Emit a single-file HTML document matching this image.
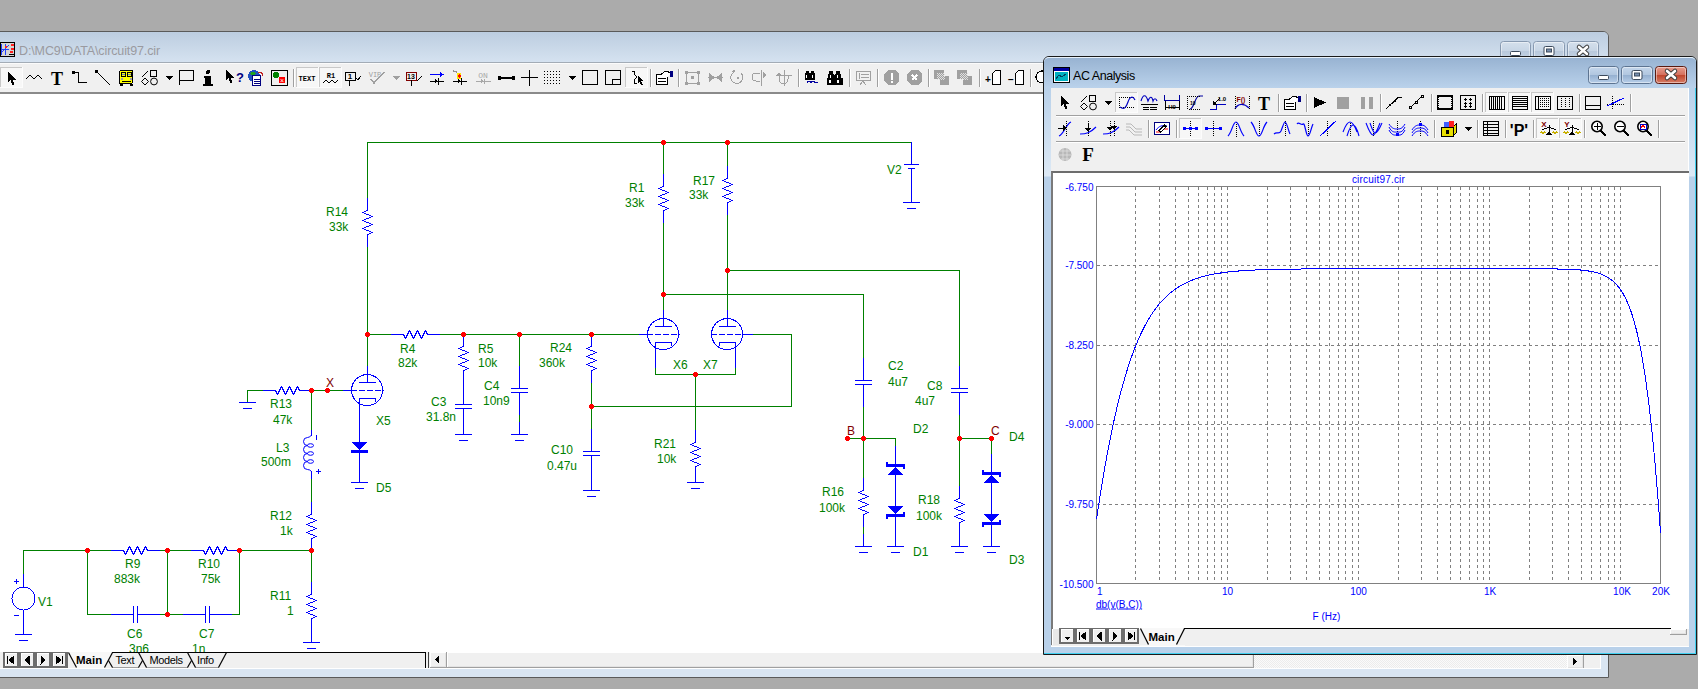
<!DOCTYPE html>
<html><head><meta charset="utf-8">
<style>
*{margin:0;padding:0;box-sizing:border-box}
html,body{width:1698px;height:689px;overflow:hidden;background:#ababab;font-family:"Liberation Sans",sans-serif;position:relative}
.a{position:absolute}
#mainwin{left:-8px;top:31px;width:1617px;height:647px;background:#d9e5f2;border:1px solid #5a5a5a;border-radius:6px 6px 0 0}
#maintitle{left:0;top:32px;width:1608px;height:31px;background:linear-gradient(#bccde0,#d5e2f0);border-radius:0 5px 0 0;border-bottom:1px solid #a3acb6}
#toolbar{left:0;top:63px;width:1601px;height:31px;background:#f0f0f0;border-top:1px solid #fbfbfb;border-bottom:2px solid #8a8a8a}
#canvas{left:0;top:94px;width:1601px;height:558px;background:#fff;overflow:hidden}
#tabs{left:0;top:652px;width:1601px;height:17px;background:#f0f0f0;border-bottom:1px solid #fff}
#acwin{left:1043px;top:56px;width:654px;height:599px;background:linear-gradient(#b9d1ea 0,#b9d1ea 32px,#dde9f5 119px,#b9d1ea 120px,#b9d1ea 100%);border:1px solid #1a1a1a;border-radius:6px 6px 0 0;box-shadow:inset -1px -1px 0 #40d0f0}
#actitle{left:1044px;top:57px;width:652px;height:31px;background:linear-gradient(#98b3d2,#bad2eb);border-radius:5px 5px 0 0;border-top:1px solid #e8f2fb}
#acclient{left:1051px;top:88px;width:638px;height:559px;background:#f0f0f0;border-bottom:1px solid #fff;border-right:1px solid #fff}
#plot{left:1051px;top:171px;width:638px;height:474px;background:#fff;border-top:2px solid #6d6d6d;border-left:2px solid #7a7a7a}
.btn{position:absolute;height:18px;border:1px solid #6b7f99;border-radius:3px;background:linear-gradient(#d8e4f1 0,#c8d7e8 50%,#b4c8df 51%,#c9dbee 100%)}
</style></head><body>
<div id="mainwin" class="a"></div>
<div id="maintitle" class="a"></div>
<div id="toolbar" class="a"></div>
<svg class="a" style="left:0;top:0" width="1698" height="100" shape-rendering="crispEdges"><defs><pattern id="dith" width="2" height="2" patternUnits="userSpaceOnUse"><rect width="1" height="1" fill="#e0e0e0"/><rect x="1" y="1" width="1" height="1" fill="#e0e0e0"/></pattern>
<linearGradient id="ginact" x1="0" y1="0" x2="0" y2="1"><stop offset="0" stop-color="#d5e0ec"/><stop offset=".5" stop-color="#c7d5e5"/><stop offset=".51" stop-color="#b9c9dc"/><stop offset="1" stop-color="#c5d4e5"/></linearGradient>
<linearGradient id="gact" x1="0" y1="0" x2="0" y2="1"><stop offset="0" stop-color="#c5d7ec"/><stop offset=".5" stop-color="#b0c6df"/><stop offset=".51" stop-color="#95b0d0"/><stop offset="1" stop-color="#b9d0ea"/></linearGradient>
<linearGradient id="gred" x1="0" y1="0" x2="0" y2="1"><stop offset="0" stop-color="#e8a092"/><stop offset=".5" stop-color="#d46f5c"/><stop offset=".51" stop-color="#c0452c"/><stop offset="1" stop-color="#d8806a"/></linearGradient>
</defs><rect x="0" y="67" width="23" height="21" fill="#f7f7f7"/><path d="M0 67.5H23" stroke="#c8c8c8"/><path d="M0.5 67V88" stroke="#c8c8c8"/><path d="M0 87.5H23" stroke="#fcfcfc"/><path d="M22.5 67V88" stroke="#fcfcfc"/><polygon points="8,72 8,82.0 10.5,80.0 12.5,85.0 14.5,84.0 12.5,79.5 16.0,79.5" fill="#000"/><polyline points="26,79 30,75 34,79 38,75 42,79" fill="none" stroke="#000" stroke-width="1" stroke-linejoin="bevel"/><text x="57" y="85" fill="#000" font-size="18" font-weight="bold" font-family="Liberation Serif" text-anchor="middle" >T</text><rect x="72" y="71" width="3" height="3" fill="#000"/><polyline points="74,72.5 78.5,72.5 78.5,82.5 87,82.5" fill="none" stroke="#000" stroke-width="1" /><rect x="95" y="70" width="3" height="3" fill="#000"/><polyline points="96,71 110,85" fill="none" stroke="#000" stroke-width="1.2" /><rect x="119.5" y="70.5" width="13" height="13" rx="1.5" fill="#ffff00" stroke="#000"/><rect x="120" y="84" width="3" height="2" fill="#000"/><rect x="130" y="84" width="3" height="2" fill="#000"/><rect x="121.5" y="72.5" width="4" height="4" fill="none" stroke="#000" stroke-width="1"/><rect x="127.5" y="72.5" width="4" height="4" fill="none" stroke="#000" stroke-width="1"/><path d="M122 74.5H125" stroke="#6080c0"/><path d="M128 74.5H131" stroke="#6080c0"/><rect x="121" y="78" width="2" height="2" fill="#a0a0a0"/><rect x="130" y="78" width="2" height="2" fill="#a0a0a0"/><path d="M122 81.5H131" stroke="#000"/><polyline points="142,77 148,71" fill="none" stroke="#000" stroke-width="1.2" /><rect x="150.5" y="70.5" width="6" height="6" fill="none" stroke="#000" stroke-width="1"/><polygon points="145,78 149,81.5 145,85 141.5,81.5" fill="none"/><polygon points="145,78 148.5,81.5 145,85 141.5,81.5" fill="none" stroke="#000" shape-rendering="auto"/><circle cx="154" cy="81.5" r="3.4" fill="none" stroke="#000" shape-rendering="auto"/><polygon points="165,76 173,76 169,80" fill="#000"/><polyline points="179.5,85 179.5,70.5 193.5,70.5 193.5,80.5 179.5,80.5" fill="none" stroke="#000" stroke-width="1" /><circle cx="208" cy="72" r="2" fill="#000"/><rect x="205" y="76" width="6" height="10" fill="#000"/><rect x="203" y="84" width="10" height="2" fill="#000"/><rect x="204" y="76" width="3" height="2" fill="#000"/><polygon points="226,70 226,80.0 228.5,78.0 230.5,83.0 232.5,82.0 230.5,77.5 234.0,77.5" fill="#000"/><text x="236" y="82" fill="#000080" font-size="13" font-weight="bold" font-family="Liberation Sans" text-anchor="start" >?</text><circle cx="254" cy="76" r="6" fill="#2050c0"/><path d="M250 73 q3 -3 6 0 q-2 3 -5 2z" fill="#20a020"/><rect x="252.5" y="75.5" width="8" height="10" fill="#fff" stroke="#000080"/><path d="M254 79.5H260" stroke="#000080"/><path d="M254 81.5H260" stroke="#000080"/><path d="M254 83.5H260" stroke="#000080"/><path d="M258 73 q4 -2 5 3" fill="none" stroke="#c02020" stroke-width="1.2"/><rect x="271.5" y="70.5" width="16" height="15" fill="none" stroke="#000" stroke-width="1"/><circle cx="276" cy="75" r="3" fill="#008000"/><circle cx="282" cy="80" r="3.5" fill="#ff0000"/><text x="282" y="82.5" fill="#fff" font-size="7" font-weight="normal" font-family="Liberation Sans" text-anchor="middle" >×</text><path d="M293.5 69V87" stroke="#a0a0a0"/><path d="M294.5 69V87" stroke="#ffffff"/><rect x="296" y="67" width="23" height="21" fill="#f7f7f7"/><path d="M296 67.5H319" stroke="#c8c8c8"/><path d="M296.5 67V88" stroke="#c8c8c8"/><path d="M296 87.5H319" stroke="#fcfcfc"/><path d="M318.5 67V88" stroke="#fcfcfc"/><text x="307" y="81" fill="#000" font-size="7" font-weight="bold" font-family="Liberation Mono" text-anchor="middle" >TEXT</text><rect x="319" y="67" width="23" height="21" fill="#f7f7f7"/><path d="M319 67.5H342" stroke="#c8c8c8"/><path d="M319.5 67V88" stroke="#c8c8c8"/><path d="M319 87.5H342" stroke="#fcfcfc"/><path d="M341.5 67V88" stroke="#fcfcfc"/><text x="331" y="78" fill="#000" font-size="7" font-weight="bold" font-family="Liberation Mono" text-anchor="middle" >R1</text><polyline points="323,83 326,80 329,83 332,80 335,83 338,80" fill="none" stroke="#000" stroke-width="1" /><rect x="345.5" y="72.5" width="10" height="8" fill="none" stroke="#000" stroke-width="1"/><text x="350" y="79" fill="#000" font-size="8" font-weight="bold" font-family="Liberation Sans" text-anchor="middle" >1</text><path d="M349.5 80V86" stroke="#000"/><polyline points="355,77 358,80 361,76" fill="none" stroke="#000" stroke-width="1" /><text x="375" y="77" fill="#a0a0a0" font-size="7" font-weight="normal" font-family="Liberation Mono" text-anchor="middle" >VIP</text><polyline points="371,79 374,83 384,72" fill="none" stroke="#a0a0a0" stroke-width="1.5" /><polygon points="392,76 400,76 396,80" fill="#a0a0a0"/><rect x="406.5" y="72.5" width="10" height="8" fill="none" stroke="#800000" stroke-width="1"/><text x="411" y="79" fill="#000" font-size="7" font-weight="bold" font-family="Liberation Sans" text-anchor="middle" >13</text><path d="M411.5 80V86" stroke="#000"/><polyline points="417,81 422,76" fill="none" stroke="#000" stroke-width="1" /><path d="M430 74.5H442" stroke="#0000ff"/><polygon points="440,72 444,74.5 440,77" fill="#0000ff"/><path d="M430 81.5H444" stroke="#000"/><polygon points="435,78.5 438,81 435,83.5" fill="#000"/><path d="M438.5 78V85" stroke="#000"/><ellipse cx="459" cy="76" rx="2.5" ry="3.5" fill="#ffe000"/><polygon points="459,74 461,76 459,78 457,76" fill="#ff0000"/><polyline points="453,71 457,72" fill="none" stroke="#909090" stroke-width="1.5" /><path d="M453 81.5H467" stroke="#000"/><polygon points="458,78.5 461,81 458,83.5" fill="#000"/><path d="M461.5 78V85" stroke="#000"/><text x="483" y="78" fill="#a8a8a8" font-size="8" font-weight="normal" font-family="Liberation Mono" text-anchor="middle" >ON</text><path d="M476 81.5H491" stroke="#a8a8a8"/><polygon points="481,79 484,81 481,83" fill="#a8a8a8"/><path d="M484.5 79V84" stroke="#a8a8a8"/><rect x="498" y="76" width="3" height="4" fill="#000"/><rect x="512" y="76" width="3" height="4" fill="#000"/><path d="M500 77.5H513" stroke="#000"/><path d="M500 78.5H513" stroke="#000"/><path d="M521 77.5H538" stroke="#000"/><path d="M529.5 70V86" stroke="#000"/><rect x="544" y="71" width="1" height="1" fill="#000"/><rect x="544" y="74" width="1" height="1" fill="#000"/><rect x="544" y="77" width="1" height="1" fill="#000"/><rect x="544" y="80" width="1" height="1" fill="#000"/><rect x="544" y="83" width="1" height="1" fill="#000"/><rect x="547" y="71" width="1" height="1" fill="#000"/><rect x="547" y="74" width="1" height="1" fill="#000"/><rect x="547" y="77" width="1" height="1" fill="#000"/><rect x="547" y="80" width="1" height="1" fill="#000"/><rect x="547" y="83" width="1" height="1" fill="#000"/><rect x="550" y="71" width="1" height="1" fill="#000"/><rect x="550" y="74" width="1" height="1" fill="#000"/><rect x="550" y="77" width="1" height="1" fill="#000"/><rect x="550" y="80" width="1" height="1" fill="#000"/><rect x="550" y="83" width="1" height="1" fill="#000"/><rect x="553" y="71" width="1" height="1" fill="#000"/><rect x="553" y="74" width="1" height="1" fill="#000"/><rect x="553" y="77" width="1" height="1" fill="#000"/><rect x="553" y="80" width="1" height="1" fill="#000"/><rect x="553" y="83" width="1" height="1" fill="#000"/><rect x="556" y="71" width="1" height="1" fill="#000"/><rect x="556" y="74" width="1" height="1" fill="#000"/><rect x="556" y="77" width="1" height="1" fill="#000"/><rect x="556" y="80" width="1" height="1" fill="#000"/><rect x="556" y="83" width="1" height="1" fill="#000"/><rect x="559" y="71" width="1" height="1" fill="#000"/><rect x="559" y="74" width="1" height="1" fill="#000"/><rect x="559" y="77" width="1" height="1" fill="#000"/><rect x="559" y="80" width="1" height="1" fill="#000"/><rect x="559" y="83" width="1" height="1" fill="#000"/><polygon points="568,76 576,76 572,80" fill="#000"/><rect x="582.5" y="70.5" width="15" height="14" fill="none" stroke="#000" stroke-width="1.3"/><rect x="605.5" y="70.5" width="15" height="14" fill="none" stroke="#000" stroke-width="1.3"/><rect x="612.5" y="79.5" width="8" height="5" fill="none" stroke="#000" stroke-width="1"/><rect x="625" y="67" width="23" height="21" fill="#f7f7f7"/><path d="M625 67.5H648" stroke="#c8c8c8"/><path d="M625.5 67V88" stroke="#c8c8c8"/><path d="M625 87.5H648" stroke="#fcfcfc"/><path d="M647.5 67V88" stroke="#fcfcfc"/><polyline points="632,71.5 634.5,71.5 634.5,74.5 637,77 634.5,79.5 634.5,83.5 637,83.5" fill="none" stroke="#000" stroke-width="1.2" /><polygon points="638,76 638,83.2 639.8,81.76 641.24,85.36 642.68,84.64 641.24,81.4 643.76,81.4" fill="#000"/><path d="M650.5 69V87" stroke="#a0a0a0"/><path d="M651.5 69V87" stroke="#ffffff"/><rect x="656.5" y="74.5" width="11" height="10" fill="#fff" stroke="#000"/><path d="M658 78.5H666" stroke="#000"/><path d="M658 81.5H666" stroke="#000"/><polygon points="661,74 666,71 671,73 667,77" fill="#fff"/><polyline points="661,74 666,71 671,73" fill="none" stroke="#000" stroke-width="1" /><rect x="670" y="71" width="3" height="6" fill="#000080"/><path d="M678.5 69V87" stroke="#a0a0a0"/><path d="M679.5 69V87" stroke="#ffffff"/><rect x="686.5" y="72.5" width="12" height="11" fill="none" stroke="#a0a0a0" stroke-width="1.2"/><rect x="685" y="71" width="3" height="3" fill="#a0a0a0"/><rect x="697" y="71" width="3" height="3" fill="#a0a0a0"/><rect x="685" y="82" width="3" height="3" fill="#a0a0a0"/><rect x="697" y="82" width="3" height="3" fill="#a0a0a0"/><rect x="691" y="76" width="3" height="3" fill="#a0a0a0"/><path d="M708 77.5H723" stroke="#a0a0a0"/><polygon points="709,73 715,77.5 709,82" fill="#a0a0a0"/><polygon points="722,73 716,77.5 722,82" fill="#a0a0a0"/><path d="M734 72 A6 6 0 1 0 741 73" fill="none" stroke="#a0a0a0"/><rect x="737" y="77" width="2" height="2" fill="#a0a0a0"/><polygon points="731,71 735,70 734,74" fill="#a0a0a0"/><path d="M760 73 H756 A4 4 0 0 0 756 81 H760" fill="none" stroke="#a0a0a0"/><path d="M761.5 70V86" stroke="#a0a0a0"/><polygon points="763,72 767,75 763,78" fill="#a0a0a0"/><path d="M776 75.5H792" stroke="#a0a0a0"/><path d="M784.5 70V86" stroke="#a0a0a0"/><path d="M779 75 V79 A3 3 0 0 0 788 79 V75" fill="none" stroke="#a0a0a0"/><polygon points="776,76 779,72 782,76" fill="#a0a0a0"/><path d="M798.5 69V87" stroke="#a0a0a0"/><path d="M799.5 69V87" stroke="#ffffff"/><rect x="806" y="71" width="3" height="2" fill="#000"/><rect x="811" y="71" width="3" height="2" fill="#000"/><rect x="805" y="73" width="5" height="7" fill="#000"/><rect x="810" y="73" width="5" height="7" fill="#000"/><rect x="809" y="74" width="2" height="4" fill="#000"/><rect x="806" y="75" width="1" height="3" fill="#fff"/><rect x="812" y="75" width="1" height="3" fill="#fff"/><polyline points="807,82.5 809,81 811,82.5 813,81 815,82.5 818,82" fill="none" stroke="#0000a0" stroke-width="1" stroke-linejoin="bevel"/><rect x="829" y="71" width="4" height="3" fill="#000"/><rect x="836" y="71" width="4" height="3" fill="#000"/><rect x="828" y="74" width="6" height="11" fill="#000"/><rect x="835" y="74" width="6" height="11" fill="#000"/><rect x="827" y="78" width="16" height="7" fill="#000"/><rect x="833" y="75" width="3" height="5" fill="#000"/><rect x="829" y="80" width="2" height="3" fill="#fff"/><rect x="837" y="80" width="2" height="3" fill="#fff"/><rect x="830" y="75" width="1" height="3" fill="#fff"/><rect x="837" y="75" width="1" height="3" fill="#fff"/><path d="M849.5 69V87" stroke="#a0a0a0"/><path d="M850.5 69V87" stroke="#ffffff"/><rect x="856.5" y="71.5" width="14" height="9" fill="none" stroke="#a0a0a0" stroke-width="1.3"/><path d="M861 74.5H869" stroke="#a0a0a0"/><path d="M861 77.5H869" stroke="#a0a0a0"/><path d="M859.5 73V79" stroke="#a0a0a0"/><polyline points="860,85 863,81 866,85" fill="none" stroke="#a0a0a0" stroke-width="1" /><path d="M877.5 69V87" stroke="#a0a0a0"/><path d="M878.5 69V87" stroke="#ffffff"/><polygon points="888,70 895,70 899,74 899,81 895,85 888,85 884,81 884,74" fill="#a0a0a0"/><rect x="891" y="73" width="2" height="7" fill="#fff"/><rect x="891" y="81" width="2" height="2" fill="#fff"/><polygon points="911,70 918,70 922,74 922,81 918,85 911,85 907,81 907,74" fill="#a0a0a0"/><polyline points="912,75 917,80" fill="none" stroke="#fff" stroke-width="1.5" /><polyline points="917,75 912,80" fill="none" stroke="#fff" stroke-width="1.5" /><path d="M928.5 69V87" stroke="#a0a0a0"/><path d="M929.5 69V87" stroke="#ffffff"/><rect x="934" y="70" width="10" height="9" fill="#a0a0a0"/><rect x="940" y="76" width="9" height="9" fill="#a0a0a0"/><rect x="937" y="73" width="8" height="7" fill="url(#dith)"/><rect x="957" y="70" width="10" height="9" fill="#a0a0a0"/><rect x="963" y="76" width="9" height="9" fill="#a0a0a0"/><rect x="960" y="73" width="8" height="7" fill="url(#dith)"/><path d="M979.5 69V87" stroke="#a0a0a0"/><path d="M980.5 69V87" stroke="#ffffff"/><text x="988" y="83" fill="#000" font-size="10" font-weight="bold" font-family="Liberation Sans" text-anchor="middle" >+</text><path d="M992.5 84.5 V73.5 L995.5 70.5 H1000.5 V84.5 Z" fill="#fff" stroke="#000" stroke-width="1.2"/><text x="1011" y="83" fill="#000" font-size="10" font-weight="bold" font-family="Liberation Sans" text-anchor="middle" >−</text><path d="M1015.5 84.5 V73.5 L1018.5 70.5 H1023.5 V84.5 Z" fill="#fff" stroke="#000" stroke-width="1.2"/><path d="M1030.5 69V87" stroke="#a0a0a0"/><path d="M1031.5 69V87" stroke="#ffffff"/><circle cx="1042" cy="77" r="6" fill="#fff" stroke="#000" stroke-width="1.2"/><rect x="1500.5" y="41.5" width="30" height="19" rx="3" fill="url(#ginact)" stroke="#8799b0" shape-rendering="auto"/><rect x="1501.5" y="42.5" width="28" height="17" rx="2" fill="none" stroke="#ffffff" stroke-opacity=".45" shape-rendering="auto"/><rect x="1510.5" y="51.5" width="10" height="4" rx="1" fill="#fff" stroke="#3c4a5c" shape-rendering="auto"/><rect x="1533.5" y="41.5" width="31" height="19" rx="3" fill="url(#ginact)" stroke="#8799b0" shape-rendering="auto"/><rect x="1534.5" y="42.5" width="29" height="17" rx="2" fill="none" stroke="#ffffff" stroke-opacity=".45" shape-rendering="auto"/><rect x="1544.0" y="46.5" width="10" height="9" rx="1.5" fill="#fff" stroke="#3c4a5c" shape-rendering="auto"/><rect x="1546.5" y="49.0" width="5" height="3" fill="#7890b0" stroke="#3c4a5c" shape-rendering="auto"/><rect x="1567.5" y="41.5" width="31" height="19" rx="3" fill="url(#ginact)" stroke="#8799b0" shape-rendering="auto"/><rect x="1568.5" y="42.5" width="29" height="17" rx="2" fill="none" stroke="#ffffff" stroke-opacity=".45" shape-rendering="auto"/><path d="M1579.0 47.0L1587.0 54.0M1587.0 47.0L1579.0 54.0" stroke="#3c3c3c" stroke-width="4.5" stroke-linecap="round" shape-rendering="auto"/><path d="M1579.0 47.0L1587.0 54.0M1587.0 47.0L1579.0 54.0" stroke="#fff" stroke-width="2.6" stroke-linecap="round" shape-rendering="auto"/><rect x="0.5" y="42.5" width="14" height="14" fill="#d4d4d4" stroke="#000" stroke-width="1"/><path d="M1.5 44V55" stroke="#2040ff"/><path d="M5.5 44V55" stroke="#2040ff"/><polyline points="2,52 9,45" fill="none" stroke="#2040ff" stroke-width="1.2" /><path d="M1 49.5H9" stroke="#2040ff"/><rect x="5" y="46" width="2" height="2" fill="#ff2020"/><rect x="11" y="44" width="3" height="2" fill="#ff2020"/><rect x="11" y="48" width="3" height="2" fill="#ff2020"/><rect x="10" y="51" width="3" height="2" fill="#ff2020"/><path d="M9 54.5H14" stroke="#000"/><text x="19" y="55" fill="#9a9aa0" font-size="12.5" letter-spacing="-0.12" font-family="Liberation Sans">D:\MC9\DATA\circuit97.cir</text></svg>
<div id="canvas" class="a"></div>
<svg class="a" style="left:0;top:0" width="1698" height="689" shape-rendering="crispEdges" font-family="Liberation Sans" font-size="12"><path d="M367 142.5H912" stroke="#008000"/><path d="M367.5 142V199" stroke="#008000"/><path d="M367.5 246V367" stroke="#008000"/><path d="M663.5 142V175" stroke="#008000"/><path d="M663.5 222V311" stroke="#008000"/><path d="M727.5 142V167" stroke="#008000"/><path d="M727.5 214V311" stroke="#008000"/><path d="M727 270.5H960" stroke="#008000"/><path d="M959.5 270V367" stroke="#008000"/><path d="M663 294.5H864" stroke="#008000"/><path d="M863.5 294V359" stroke="#008000"/><path d="M367 334.5H392" stroke="#008000"/><path d="M439 334.5H640" stroke="#008000"/><path d="M519.5 334V367" stroke="#008000"/><path d="M591.5 334V335" stroke="#008000"/><path d="M591.5 382V430" stroke="#008000"/><path d="M591 406.5H792" stroke="#008000"/><path d="M791.5 334V407" stroke="#008000"/><path d="M752 334.5H792" stroke="#008000"/><path d="M655.5 367V375" stroke="#008000"/><path d="M655 374.5H736" stroke="#008000"/><path d="M735.5 367V375" stroke="#008000"/><path d="M695.5 374V431" stroke="#008000"/><path d="M863.5 406V479" stroke="#008000"/><path d="M847 438.5H896" stroke="#008000"/><path d="M895.5 438V447" stroke="#008000"/><path d="M863.5 526V535" stroke="#008000"/><path d="M959.5 414V487" stroke="#008000"/><path d="M959 438.5H992" stroke="#008000"/><path d="M991.5 438V455" stroke="#008000"/><path d="M519.5 415V422" stroke="#008000"/><path d="M247 390.5H264" stroke="#008000"/><path d="M311 390.5H344" stroke="#008000"/><path d="M311.5 390V431" stroke="#008000"/><path d="M311.5 478V503" stroke="#008000"/><path d="M311.5 550V583" stroke="#008000"/><path d="M23 550.5H112" stroke="#008000"/><path d="M23.5 550V575" stroke="#008000"/><path d="M87.5 550V615" stroke="#008000"/><path d="M87 614.5H112" stroke="#008000"/><path d="M159 550.5H192" stroke="#008000"/><path d="M159 614.5H184" stroke="#008000"/><path d="M167.5 550V615" stroke="#008000"/><path d="M231 614.5H240" stroke="#008000"/><path d="M239.5 550V615" stroke="#008000"/><path d="M239 550.5H312" stroke="#008000"/><path d="M367.5 198V211" stroke="#0000ff"/><polyline points="367.5,210.5 362.5,212.5 372.5,216.5 362.5,220.5 372.5,224.5 362.5,228.5 372.5,232.5 367.5,234.5" fill="none" stroke="#0000ff" stroke-linejoin="bevel"/><path d="M367.5 234V247" stroke="#0000ff"/><path d="M663.5 174V187" stroke="#0000ff"/><polyline points="663.5,186.5 658.5,188.5 668.5,192.5 658.5,196.5 668.5,200.5 658.5,204.5 668.5,208.5 663.5,210.5" fill="none" stroke="#0000ff" stroke-linejoin="bevel"/><path d="M663.5 210V223" stroke="#0000ff"/><path d="M727.5 166V179" stroke="#0000ff"/><polyline points="727.5,178.5 722.5,180.5 732.5,184.5 722.5,188.5 732.5,192.5 722.5,196.5 732.5,200.5 727.5,202.5" fill="none" stroke="#0000ff" stroke-linejoin="bevel"/><path d="M727.5 202V215" stroke="#0000ff"/><path d="M463.5 334V347" stroke="#0000ff"/><polyline points="463.5,346.5 458.5,348.5 468.5,352.5 458.5,356.5 468.5,360.5 458.5,364.5 468.5,368.5 463.5,370.5" fill="none" stroke="#0000ff" stroke-linejoin="bevel"/><path d="M463.5 370V383" stroke="#0000ff"/><path d="M463.5 382V405" stroke="#0000ff"/><path d="M455 404.5H472" stroke="#0000ff"/><path d="M455 408.5H472" stroke="#0000ff"/><path d="M463.5 408V431" stroke="#0000ff"/><path d="M463.5 430V435" stroke="#0000ff"/><path d="M455 434.5H472" stroke="#0000ff"/><path d="M459 440.5H468" stroke="#0000ff"/><path d="M519.5 366V389" stroke="#0000ff"/><path d="M511 388.5H528" stroke="#0000ff"/><path d="M511 392.5H528" stroke="#0000ff"/><path d="M519.5 392V415" stroke="#0000ff"/><path d="M519.5 422V435" stroke="#0000ff"/><path d="M511 434.5H528" stroke="#0000ff"/><path d="M515 440.5H524" stroke="#0000ff"/><path d="M591.5 334V347" stroke="#0000ff"/><polyline points="591.5,346.5 586.5,348.5 596.5,352.5 586.5,356.5 596.5,360.5 586.5,364.5 596.5,368.5 591.5,370.5" fill="none" stroke="#0000ff" stroke-linejoin="bevel"/><path d="M591.5 370V383" stroke="#0000ff"/><path d="M591.5 429V452" stroke="#0000ff"/><path d="M583 451.5H600" stroke="#0000ff"/><path d="M583 455.5H600" stroke="#0000ff"/><path d="M591.5 455V478" stroke="#0000ff"/><path d="M591.5 477V491" stroke="#0000ff"/><path d="M583 490.5H600" stroke="#0000ff"/><path d="M587 496.5H596" stroke="#0000ff"/><path d="M695.5 430V443" stroke="#0000ff"/><polyline points="695.5,442.5 690.5,444.5 700.5,448.5 690.5,452.5 700.5,456.5 690.5,460.5 700.5,464.5 695.5,466.5" fill="none" stroke="#0000ff" stroke-linejoin="bevel"/><path d="M695.5 466V479" stroke="#0000ff"/><path d="M695.5 478V483" stroke="#0000ff"/><path d="M687 482.5H704" stroke="#0000ff"/><path d="M691 488.5H700" stroke="#0000ff"/><path d="M863.5 358V381" stroke="#0000ff"/><path d="M855 380.5H872" stroke="#0000ff"/><path d="M855 384.5H872" stroke="#0000ff"/><path d="M863.5 384V407" stroke="#0000ff"/><path d="M959.5 366V389" stroke="#0000ff"/><path d="M951 388.5H968" stroke="#0000ff"/><path d="M951 392.5H968" stroke="#0000ff"/><path d="M959.5 392V415" stroke="#0000ff"/><path d="M863.5 478V491" stroke="#0000ff"/><polyline points="863.5,490.5 858.5,492.5 868.5,496.5 858.5,500.5 868.5,504.5 858.5,508.5 868.5,512.5 863.5,514.5" fill="none" stroke="#0000ff" stroke-linejoin="bevel"/><path d="M863.5 514V527" stroke="#0000ff"/><path d="M863.5 534V547" stroke="#0000ff"/><path d="M855 546.5H872" stroke="#0000ff"/><path d="M859 552.5H868" stroke="#0000ff"/><path d="M959.5 486V499" stroke="#0000ff"/><polyline points="959.5,498.5 954.5,500.5 964.5,504.5 954.5,508.5 964.5,512.5 954.5,516.5 964.5,520.5 959.5,522.5" fill="none" stroke="#0000ff" stroke-linejoin="bevel"/><path d="M959.5 522V535" stroke="#0000ff"/><path d="M959.5 534V547" stroke="#0000ff"/><path d="M951 546.5H968" stroke="#0000ff"/><path d="M955 552.5H964" stroke="#0000ff"/><path d="M391 334.5H404" stroke="#0000ff"/><polyline points="403.5,334.5 405.5,338.5 409.5,330.5 413.5,338.5 417.5,330.5 421.5,338.5 425.5,330.5 427.5,334.5" fill="none" stroke="#0000ff" stroke-linejoin="bevel"/><path d="M427 334.5H440" stroke="#0000ff"/><path d="M263 390.5H276" stroke="#0000ff"/><polyline points="275.5,390.5 277.5,394.5 281.5,386.5 285.5,394.5 289.5,386.5 293.5,394.5 297.5,386.5 299.5,390.5" fill="none" stroke="#0000ff" stroke-linejoin="bevel"/><path d="M299 390.5H312" stroke="#0000ff"/><path d="M247.5 390V403" stroke="#008000"/><path d="M239 402.5H256" stroke="#0000ff"/><path d="M243 408.5H252" stroke="#0000ff"/><path d="M311.5 502V515" stroke="#0000ff"/><polyline points="311.5,514.5 306.5,516.5 316.5,520.5 306.5,524.5 316.5,528.5 306.5,532.5 316.5,536.5 311.5,538.5" fill="none" stroke="#0000ff" stroke-linejoin="bevel"/><path d="M311.5 538V551" stroke="#0000ff"/><path d="M311.5 582V595" stroke="#0000ff"/><polyline points="311.5,594.5 306.5,596.5 316.5,600.5 306.5,604.5 316.5,608.5 306.5,612.5 316.5,616.5 311.5,618.5" fill="none" stroke="#0000ff" stroke-linejoin="bevel"/><path d="M311.5 618V631" stroke="#0000ff"/><path d="M311.5 630V643" stroke="#0000ff"/><path d="M303 642.5H320" stroke="#0000ff"/><path d="M307 648.5H316" stroke="#0000ff"/><path d="M111 550.5H124" stroke="#0000ff"/><polyline points="123.5,550.5 125.5,554.5 129.5,546.5 133.5,554.5 137.5,546.5 141.5,554.5 145.5,546.5 147.5,550.5" fill="none" stroke="#0000ff" stroke-linejoin="bevel"/><path d="M147 550.5H160" stroke="#0000ff"/><path d="M191 550.5H204" stroke="#0000ff"/><polyline points="203.5,550.5 205.5,554.5 209.5,546.5 213.5,554.5 217.5,546.5 221.5,554.5 225.5,546.5 227.5,550.5" fill="none" stroke="#0000ff" stroke-linejoin="bevel"/><path d="M227 550.5H240" stroke="#0000ff"/><path d="M111 614.5H134" stroke="#0000ff"/><path d="M133.5 606V623" stroke="#0000ff"/><path d="M137.5 606V623" stroke="#0000ff"/><path d="M137 614.5H160" stroke="#0000ff"/><path d="M183 614.5H206" stroke="#0000ff"/><path d="M205.5 606V623" stroke="#0000ff"/><path d="M209.5 606V623" stroke="#0000ff"/><path d="M209 614.5H232" stroke="#0000ff"/><path d="M911.5 142V165" stroke="#0000ff"/><path d="M904 164.5H919" stroke="#0000ff"/><path d="M908 168.5H915" stroke="#0000ff"/><path d="M911.5 168V203" stroke="#0000ff"/><path d="M903 202.5H920" stroke="#0000ff"/><path d="M907 208.5H916" stroke="#0000ff"/><path d="M23.5 574V587" stroke="#0000ff"/><circle cx="23.5" cy="598.5" r="11.5" fill="none" stroke="#0000ff"/><path d="M23.5 610V635" stroke="#0000ff"/><path d="M15 634.5H32" stroke="#0000ff"/><path d="M19 640.5H28" stroke="#0000ff"/><path d="M14 581.5H19" stroke="#0000ff"/><path d="M16.5 579V584" stroke="#0000ff"/><path d="M14 615.5H19" stroke="#0000ff"/><circle cx="367.1" cy="390.1" r="15.5" fill="none" stroke="#0000ff"/><path d="M359 382.5H376" stroke="#0000ff"/><path d="M367.5 374V383" stroke="#0000ff"/><path d="M351 390.5H384" stroke="#0000ff" stroke-dasharray="6,2"/><path d="M359 398.5H376" stroke="#0000ff"/><path d="M375.5 398V402" stroke="#0000ff"/><path d="M343 390.5H352" stroke="#0000ff"/><path d="M367.5 366V375" stroke="#0000ff"/><path d="M359.5 398V443" stroke="#0000ff"/><circle cx="663.1" cy="334.1" r="15.5" fill="none" stroke="#0000ff"/><path d="M655 326.5H672" stroke="#0000ff"/><path d="M663.5 318V327" stroke="#0000ff"/><path d="M647 334.5H680" stroke="#0000ff" stroke-dasharray="6,2"/><path d="M655 342.5H672" stroke="#0000ff"/><path d="M671.5 342V346" stroke="#0000ff"/><path d="M639 334.5H648" stroke="#0000ff"/><path d="M663.5 310V319" stroke="#0000ff"/><path d="M655.5 342V368" stroke="#0000ff"/><circle cx="727.1" cy="334.1" r="15.5" fill="none" stroke="#0000ff"/><path d="M719 326.5H736" stroke="#0000ff"/><path d="M727.5 318V327" stroke="#0000ff"/><path d="M711 334.5H744" stroke="#0000ff" stroke-dasharray="6,2"/><path d="M719 342.5H736" stroke="#0000ff"/><path d="M719.5 342V346" stroke="#0000ff"/><path d="M743 334.5H753" stroke="#0000ff"/><path d="M727.5 310V319" stroke="#0000ff"/><path d="M735.5 342V368" stroke="#0000ff"/><path d="M351 442H368L359.5 450Z" fill="#0000ff"/><rect x="351" y="450" width="17" height="3" fill="#0000ff"/><path d="M359.5 452V483" stroke="#0000ff"/><path d="M351 482.5H368" stroke="#0000ff"/><path d="M355 488.5H364" stroke="#0000ff"/><path d="M311.5 430V436" stroke="#0000ff"/><path d="M311.5 471V479" stroke="#0000ff"/><path d="M311.5 435 Q310 437.5 307.5 437.5 A4 4 0 0 0 307.5 445.5 A4 4 0 0 0 307.5 453.5 A4 4 0 0 0 307.5 461.5 A4 4 0 0 0 307.5 469.5 Q310 469.5 311.5 471.5" fill="none" stroke="#0000ff" shape-rendering="auto"/><ellipse cx="310.5" cy="445.5" rx="3" ry="1.8" fill="none" stroke="#0000ff" shape-rendering="auto"/><ellipse cx="310.5" cy="453.5" rx="3" ry="1.8" fill="none" stroke="#0000ff" shape-rendering="auto"/><ellipse cx="310.5" cy="461.5" rx="3" ry="1.8" fill="none" stroke="#0000ff" shape-rendering="auto"/><path d="M316.5 435V440" stroke="#0000ff"/><path d="M316 471.5H321" stroke="#0000ff"/><path d="M318.5 469V474" stroke="#0000ff"/><path d="M895.5 446V547" stroke="#0000ff"/><rect x="886" y="464" width="19" height="3" fill="#0000ff"/><rect x="886" y="462" width="2" height="3" fill="#0000ff"/><rect x="903" y="466" width="2" height="3" fill="#0000ff"/><path d="M887 475H904L895.5 467Z" fill="#0000ff"/><path d="M887 506H904L895.5 514Z" fill="#0000ff"/><rect x="886" y="514" width="19" height="3" fill="#0000ff"/><rect x="886" y="516" width="2" height="3" fill="#0000ff"/><rect x="903" y="512" width="2" height="3" fill="#0000ff"/><path d="M887 546.5H904" stroke="#0000ff"/><path d="M891 552.5H900" stroke="#0000ff"/><path d="M991.5 454V547" stroke="#0000ff"/><rect x="982" y="472" width="19" height="3" fill="#0000ff"/><rect x="982" y="470" width="2" height="3" fill="#0000ff"/><rect x="999" y="474" width="2" height="3" fill="#0000ff"/><path d="M983 483H1000L991.5 475Z" fill="#0000ff"/><path d="M983 514H1000L991.5 522Z" fill="#0000ff"/><rect x="982" y="522" width="19" height="3" fill="#0000ff"/><rect x="982" y="524" width="2" height="3" fill="#0000ff"/><rect x="999" y="520" width="2" height="3" fill="#0000ff"/><path d="M983 546.5H1000" stroke="#0000ff"/><path d="M987 552.5H996" stroke="#0000ff"/><rect x="366" y="332" width="3" height="5" fill="#ff0000"/><rect x="365" y="333" width="5" height="3" fill="#ff0000"/><rect x="462" y="332" width="3" height="5" fill="#ff0000"/><rect x="461" y="333" width="5" height="3" fill="#ff0000"/><rect x="518" y="332" width="3" height="5" fill="#ff0000"/><rect x="517" y="333" width="5" height="3" fill="#ff0000"/><rect x="590" y="332" width="3" height="5" fill="#ff0000"/><rect x="589" y="333" width="5" height="3" fill="#ff0000"/><rect x="590" y="404" width="3" height="5" fill="#ff0000"/><rect x="589" y="405" width="5" height="3" fill="#ff0000"/><rect x="662" y="140" width="3" height="5" fill="#ff0000"/><rect x="661" y="141" width="5" height="3" fill="#ff0000"/><rect x="726" y="140" width="3" height="5" fill="#ff0000"/><rect x="725" y="141" width="5" height="3" fill="#ff0000"/><rect x="662" y="292" width="3" height="5" fill="#ff0000"/><rect x="661" y="293" width="5" height="3" fill="#ff0000"/><rect x="726" y="268" width="3" height="5" fill="#ff0000"/><rect x="725" y="269" width="5" height="3" fill="#ff0000"/><rect x="694" y="372" width="3" height="5" fill="#ff0000"/><rect x="693" y="373" width="5" height="3" fill="#ff0000"/><rect x="862" y="436" width="3" height="5" fill="#ff0000"/><rect x="861" y="437" width="5" height="3" fill="#ff0000"/><rect x="846" y="436" width="3" height="5" fill="#ff0000"/><rect x="845" y="437" width="5" height="3" fill="#ff0000"/><rect x="958" y="436" width="3" height="5" fill="#ff0000"/><rect x="957" y="437" width="5" height="3" fill="#ff0000"/><rect x="990" y="436" width="3" height="5" fill="#ff0000"/><rect x="989" y="437" width="5" height="3" fill="#ff0000"/><rect x="310" y="388" width="3" height="5" fill="#ff0000"/><rect x="309" y="389" width="5" height="3" fill="#ff0000"/><rect x="326" y="388" width="3" height="5" fill="#ff0000"/><rect x="325" y="389" width="5" height="3" fill="#ff0000"/><rect x="86" y="548" width="3" height="5" fill="#ff0000"/><rect x="85" y="549" width="5" height="3" fill="#ff0000"/><rect x="166" y="548" width="3" height="5" fill="#ff0000"/><rect x="165" y="549" width="5" height="3" fill="#ff0000"/><rect x="238" y="548" width="3" height="5" fill="#ff0000"/><rect x="237" y="549" width="5" height="3" fill="#ff0000"/><rect x="166" y="612" width="3" height="5" fill="#ff0000"/><rect x="165" y="613" width="5" height="3" fill="#ff0000"/><rect x="310" y="548" width="3" height="5" fill="#ff0000"/><rect x="309" y="549" width="5" height="3" fill="#ff0000"/><text x="326" y="216" fill="#008000" text-anchor="start">R14</text><text x="329" y="231" fill="#008000" text-anchor="start">33k</text><text x="629" y="192" fill="#008000" text-anchor="start">R1</text><text x="625" y="207" fill="#008000" text-anchor="start">33k</text><text x="693" y="185" fill="#008000" text-anchor="start">R17</text><text x="689" y="199" fill="#008000" text-anchor="start">33k</text><text x="887" y="174" fill="#008000" text-anchor="start">V2</text><text x="400" y="353" fill="#008000" text-anchor="start">R4</text><text x="398" y="367" fill="#008000" text-anchor="start">82k</text><text x="478" y="353" fill="#008000" text-anchor="start">R5</text><text x="478" y="367" fill="#008000" text-anchor="start">10k</text><text x="431" y="406" fill="#008000" text-anchor="start">C3</text><text x="426" y="421" fill="#008000" text-anchor="start">31.8n</text><text x="484" y="390" fill="#008000" text-anchor="start">C4</text><text x="483" y="405" fill="#008000" text-anchor="start">10n9</text><text x="550" y="352" fill="#008000" text-anchor="start">R24</text><text x="539" y="367" fill="#008000" text-anchor="start">360k</text><text x="673" y="369" fill="#008000" text-anchor="start">X6</text><text x="703" y="369" fill="#008000" text-anchor="start">X7</text><text x="551" y="454" fill="#008000" text-anchor="start">C10</text><text x="547" y="470" fill="#008000" text-anchor="start">0.47u</text><text x="654" y="448" fill="#008000" text-anchor="start">R21</text><text x="657" y="463" fill="#008000" text-anchor="start">10k</text><text x="888" y="370" fill="#008000" text-anchor="start">C2</text><text x="888" y="386" fill="#008000" text-anchor="start">4u7</text><text x="927" y="390" fill="#008000" text-anchor="start">C8</text><text x="915" y="405" fill="#008000" text-anchor="start">4u7</text><text x="913" y="433" fill="#008000" text-anchor="start">D2</text><text x="1009" y="441" fill="#008000" text-anchor="start">D4</text><text x="822" y="496" fill="#008000" text-anchor="start">R16</text><text x="819" y="512" fill="#008000" text-anchor="start">100k</text><text x="913" y="556" fill="#008000" text-anchor="start">D1</text><text x="918" y="504" fill="#008000" text-anchor="start">R18</text><text x="916" y="520" fill="#008000" text-anchor="start">100k</text><text x="1009" y="564" fill="#008000" text-anchor="start">D3</text><text x="270" y="408" fill="#008000" text-anchor="start">R13</text><text x="273" y="424" fill="#008000" text-anchor="start">47k</text><text x="376" y="425" fill="#008000" text-anchor="start">X5</text><text x="376" y="492" fill="#008000" text-anchor="start">D5</text><text x="276" y="452" fill="#008000" text-anchor="start">L3</text><text x="261" y="466" fill="#008000" text-anchor="start">500m</text><text x="270" y="520" fill="#008000" text-anchor="start">R12</text><text x="280" y="535" fill="#008000" text-anchor="start">1k</text><text x="270" y="600" fill="#008000" text-anchor="start">R11</text><text x="287" y="615" fill="#008000" text-anchor="start">1</text><text x="38" y="606" fill="#008000" text-anchor="start">V1</text><text x="125" y="568" fill="#008000" text-anchor="start">R9</text><text x="114" y="583" fill="#008000" text-anchor="start">883k</text><text x="198" y="568" fill="#008000" text-anchor="start">R10</text><text x="201" y="583" fill="#008000" text-anchor="start">75k</text><text x="127" y="638" fill="#008000" text-anchor="start">C6</text><text x="129" y="653" fill="#008000" text-anchor="start">3n6</text><text x="199" y="638" fill="#008000" text-anchor="start">C7</text><text x="192" y="653" fill="#008000" text-anchor="start">1n</text><text x="847" y="435" fill="#800000" text-anchor="start">B</text><text x="991" y="435" fill="#800000" text-anchor="start">C</text><text x="326" y="387" fill="#800000" text-anchor="start">X</text></svg>
<div id="tabs" class="a"></div>
<svg class="a" style="left:0;top:0" width="1698" height="689" shape-rendering="crispEdges"><defs><pattern id="dith2" width="2" height="2" patternUnits="userSpaceOnUse"><rect width="2" height="2" fill="#fafafa"/><rect width="1" height="1" fill="#ececec"/><rect x="1" y="1" width="1" height="1" fill="#ececec"/></pattern></defs><rect x="0" y="652" width="426" height="16" fill="#f0f0f0"/><path d="M112 652.5H426" stroke="#000"/><path d="M112 667.5H139" stroke="#a0a0a0"/><path d="M146 667.5H188" stroke="#a0a0a0"/><path d="M195 667.5H219" stroke="#a0a0a0"/><rect x="3" y="652" width="16" height="16" fill="#6d6d6d"/><rect x="5" y="653" width="12" height="13" fill="#f0f0f0"/><path d="M5 653.5H17" stroke="#ffffff"/><path d="M5.5 653V666" stroke="#ffffff"/><path d="M7.5 656V664" stroke="#000"/><polygon points="14.0,655.5 14.0,664.5 8.0,660.0" fill="#000"/><rect x="19" y="652" width="16" height="16" fill="#6d6d6d"/><rect x="21" y="653" width="12" height="13" fill="#f0f0f0"/><path d="M21 653.5H33" stroke="#ffffff"/><path d="M21.5 653V666" stroke="#ffffff"/><polygon points="29.5,655.5 29.5,664.5 24.5,660.0" fill="#000"/><rect x="35" y="652" width="16" height="16" fill="#6d6d6d"/><rect x="37" y="653" width="12" height="13" fill="#f0f0f0"/><path d="M37 653.5H49" stroke="#ffffff"/><path d="M37.5 653V666" stroke="#ffffff"/><polygon points="40.5,655.5 40.5,664.5 45.5,660.0" fill="#000"/><rect x="51" y="652" width="16" height="16" fill="#6d6d6d"/><rect x="53" y="653" width="12" height="13" fill="#f0f0f0"/><path d="M53 653.5H65" stroke="#ffffff"/><path d="M53.5 653V666" stroke="#ffffff"/><polygon points="56.0,655.5 56.0,664.5 62.0,660.0" fill="#000"/><path d="M62.5 656V664" stroke="#000"/><rect x="67" y="652" width="1" height="16" fill="#6d6d6d"/><polygon points="68,652 112,652 104,667.5 76,667.5" fill="#f8f8f8"/><path d="M68.5 652.5L76.5 667.5" stroke="#000" stroke-width="1.2" shape-rendering="auto"/><path d="M104.5 667.5L112.5 652.5" stroke="#000" stroke-width="1.2" shape-rendering="auto"/><path d="M108.5 660.5L112.5 667.5" stroke="#000" stroke-width="1.2" shape-rendering="auto"/><path d="M138.5 667.5L142.5 660.5" stroke="#000" stroke-width="1.2" shape-rendering="auto"/><path d="M138.5 652.5L146.5 667.5" stroke="#000" stroke-width="1.2" shape-rendering="auto"/><path d="M187.5 667.5L191.5 660.5" stroke="#000" stroke-width="1.2" shape-rendering="auto"/><path d="M187.5 652.5L195.5 667.5" stroke="#000" stroke-width="1.2" shape-rendering="auto"/><path d="M218.5 667.5L226.5 652.5" stroke="#000" stroke-width="1.2" shape-rendering="auto"/><text x="76" y="664" fill="#000" font-size="11.5" font-weight="bold" font-family="Liberation Sans">Main</text><text x="115.5" y="664" fill="#000" font-size="11" letter-spacing="-0.4" font-family="Liberation Sans">Text</text><text x="149.5" y="664" fill="#000" font-size="11" letter-spacing="-0.4" font-family="Liberation Sans">Models</text><text x="197" y="664" fill="#000" font-size="11" letter-spacing="-0.4" font-family="Liberation Sans">Info</text><path d="M425.5 652V668" stroke="#000"/><rect x="426" y="652" width="3" height="16" fill="#f0f0f0"/><path d="M428.5 652V668" stroke="#404040"/><rect x="430" y="652" width="17" height="16" fill="#f0f0f0"/><path d="M430 652.5H447" stroke="#ffffff"/><path d="M430.5 652V668" stroke="#ffffff"/><path d="M430 667.5H447" stroke="#a0a0a0"/><path d="M446.5 652V668" stroke="#a0a0a0"/><path d="M431 666.5H446" stroke="#e3e3e3"/><path d="M445.5 653V667" stroke="#e3e3e3"/><polygon points="439,656 439,663 435,659.5" fill="#000"/><rect x="447" y="652" width="807" height="16" fill="#f0f0f0"/><path d="M447 652.5H1254" stroke="#ffffff"/><path d="M447.5 652V668" stroke="#ffffff"/><path d="M447 667.5H1254" stroke="#a0a0a0"/><path d="M1253.5 652V668" stroke="#a0a0a0"/><path d="M448 666.5H1253" stroke="#e3e3e3"/><path d="M1252.5 653V667" stroke="#e3e3e3"/><rect x="1254" y="652" width="313" height="16" fill="url(#dith2)"/><rect x="1567" y="655" width="17" height="14" fill="#f0f0f0"/><path d="M1567 655.5H1584" stroke="#ffffff"/><path d="M1567.5 655V669" stroke="#ffffff"/><path d="M1567 668.5H1584" stroke="#a0a0a0"/><path d="M1583.5 655V669" stroke="#a0a0a0"/><path d="M1568 667.5H1583" stroke="#e3e3e3"/><path d="M1582.5 656V668" stroke="#e3e3e3"/><polygon points="1573,658 1573,665 1577,661.5" fill="#000"/><rect x="1584" y="655" width="17" height="14" fill="#f0f0f0"/><path d="M0 668.5H1601" stroke="#ffffff"/><path d="M1600.5 62V669" stroke="#ffffff"/></svg>
<div id="acwin" class="a"></div>
<div id="actitle" class="a"></div>
<div id="acclient" class="a"></div>
<div id="plot" class="a"></div>
<svg class="a" style="left:0;top:0" width="1698" height="689" shape-rendering="crispEdges" font-family="Liberation Sans" font-size="10"><path d="M1096.5 186V584M1096 186.5H1661M1660.5 186V584M1096 583.5H1661" stroke="#808080"/><path d="M1135.5 187V583" stroke="#808080" stroke-dasharray="3,3"/><path d="M1159.5 187V583" stroke="#808080" stroke-dasharray="3,3"/><path d="M1175.5 187V583" stroke="#808080" stroke-dasharray="3,3"/><path d="M1188.5 187V583" stroke="#808080" stroke-dasharray="3,3"/><path d="M1198.5 187V583" stroke="#808080" stroke-dasharray="3,3"/><path d="M1207.5 187V583" stroke="#808080" stroke-dasharray="3,3"/><path d="M1214.5 187V583" stroke="#808080" stroke-dasharray="3,3"/><path d="M1221.5 187V583" stroke="#808080" stroke-dasharray="3,3"/><path d="M1227.5 187V583" stroke="#808080" stroke-dasharray="3,3"/><path d="M1267.5 187V583" stroke="#808080" stroke-dasharray="3,3"/><path d="M1290.5 187V583" stroke="#808080" stroke-dasharray="3,3"/><path d="M1306.5 187V583" stroke="#808080" stroke-dasharray="3,3"/><path d="M1319.5 187V583" stroke="#808080" stroke-dasharray="3,3"/><path d="M1329.5 187V583" stroke="#808080" stroke-dasharray="3,3"/><path d="M1338.5 187V583" stroke="#808080" stroke-dasharray="3,3"/><path d="M1345.5 187V583" stroke="#808080" stroke-dasharray="3,3"/><path d="M1352.5 187V583" stroke="#808080" stroke-dasharray="3,3"/><path d="M1358.5 187V583" stroke="#808080" stroke-dasharray="3,3"/><path d="M1398.5 187V583" stroke="#808080" stroke-dasharray="3,3"/><path d="M1421.5 187V583" stroke="#808080" stroke-dasharray="3,3"/><path d="M1437.5 187V583" stroke="#808080" stroke-dasharray="3,3"/><path d="M1450.5 187V583" stroke="#808080" stroke-dasharray="3,3"/><path d="M1460.5 187V583" stroke="#808080" stroke-dasharray="3,3"/><path d="M1469.5 187V583" stroke="#808080" stroke-dasharray="3,3"/><path d="M1477.5 187V583" stroke="#808080" stroke-dasharray="3,3"/><path d="M1483.5 187V583" stroke="#808080" stroke-dasharray="3,3"/><path d="M1489.5 187V583" stroke="#808080" stroke-dasharray="3,3"/><path d="M1529.5 187V583" stroke="#808080" stroke-dasharray="3,3"/><path d="M1552.5 187V583" stroke="#808080" stroke-dasharray="3,3"/><path d="M1568.5 187V583" stroke="#808080" stroke-dasharray="3,3"/><path d="M1581.5 187V583" stroke="#808080" stroke-dasharray="3,3"/><path d="M1591.5 187V583" stroke="#808080" stroke-dasharray="3,3"/><path d="M1600.5 187V583" stroke="#808080" stroke-dasharray="3,3"/><path d="M1608.5 187V583" stroke="#808080" stroke-dasharray="3,3"/><path d="M1614.5 187V583" stroke="#808080" stroke-dasharray="3,3"/><path d="M1620.5 187V583" stroke="#808080" stroke-dasharray="3,3"/><path d="M1097 265.5H1660" stroke="#808080" stroke-dasharray="3,3"/><path d="M1097 345.5H1660" stroke="#808080" stroke-dasharray="3,3"/><path d="M1097 424.5H1660" stroke="#808080" stroke-dasharray="3,3"/><path d="M1097 504.5H1660" stroke="#808080" stroke-dasharray="3,3"/><polyline points="1096.5,519.1 1097.0,515.7 1097.5,512.4 1098.0,509.1 1098.5,505.8 1099.0,502.6 1099.5,499.4 1100.0,496.2 1100.5,493.1 1101.0,490.0 1101.5,486.9 1102.0,483.9 1102.5,480.9 1103.0,477.9 1103.5,475.0 1104.0,472.1 1104.5,469.2 1105.0,466.4 1105.5,463.5 1106.0,460.8 1106.5,458.0 1107.0,455.3 1107.5,452.6 1108.0,450.0 1108.5,447.4 1109.0,444.8 1109.5,442.2 1110.0,439.7 1110.5,437.2 1111.0,434.8 1111.5,432.3 1112.0,429.9 1112.5,427.6 1113.0,425.2 1113.5,422.9 1114.0,420.6 1114.5,418.3 1115.0,416.1 1115.5,413.9 1116.0,411.7 1116.5,409.6 1117.0,407.5 1117.5,405.4 1118.0,403.3 1118.5,401.3 1119.0,399.3 1119.5,397.3 1120.0,395.3 1120.5,393.4 1121.0,391.5 1121.5,389.6 1122.0,387.8 1122.5,385.9 1123.0,384.1 1123.5,382.4 1124.0,380.6 1124.5,378.9 1125.0,377.2 1125.5,375.5 1126.0,373.8 1126.5,372.2 1127.0,370.6 1127.5,369.0 1128.0,367.4 1128.5,365.8 1129.0,364.3 1129.5,362.8 1130.0,361.3 1130.5,359.9 1131.0,358.4 1131.5,357.0 1132.0,355.6 1132.5,354.2 1133.0,352.9 1133.5,351.5 1134.0,350.2 1134.5,348.9 1135.0,347.6 1135.5,346.3 1136.0,345.1 1136.5,343.9 1137.0,342.7 1137.5,341.5 1138.0,340.3 1138.5,339.1 1139.0,338.0 1139.5,336.9 1140.0,335.8 1140.5,334.7 1141.0,333.6 1141.5,332.6 1142.0,331.5 1142.5,330.5 1143.0,329.5 1143.5,328.5 1144.0,327.5 1144.5,326.6 1145.0,325.6 1145.5,324.7 1146.0,323.8 1146.5,322.9 1147.0,322.0 1147.5,321.1 1148.0,320.2 1148.5,319.4 1149.0,318.5 1149.5,317.7 1150.0,316.9 1150.5,316.1 1151.0,315.3 1151.5,314.6 1152.0,313.8 1152.5,313.0 1153.0,312.3 1153.5,311.6 1154.0,310.9 1154.5,310.2 1155.0,309.5 1155.5,308.8 1156.0,308.1 1156.5,307.5 1157.0,306.8 1157.5,306.2 1158.0,305.6 1158.5,304.9 1159.0,304.3 1159.5,303.7 1160.0,303.1 1160.5,302.6 1161.0,302.0 1161.5,301.4 1162.0,300.9 1162.5,300.3 1163.0,299.8 1163.5,299.3 1164.0,298.8 1164.5,298.3 1165.0,297.8 1165.5,297.3 1166.0,296.8 1166.5,296.3 1167.0,295.9 1167.5,295.4 1168.0,294.9 1168.5,294.5 1169.0,294.1 1169.5,293.6 1170.0,293.2 1170.5,292.8 1171.0,292.4 1171.5,292.0 1172.0,291.6 1172.5,291.2 1173.0,290.8 1173.5,290.4 1174.0,290.1 1174.5,289.7 1175.0,289.3 1175.5,289.0 1176.0,288.7 1176.5,288.3 1177.0,288.0 1177.5,287.6 1178.0,287.3 1178.5,287.0 1179.0,286.7 1179.5,286.4 1180.0,286.1 1180.5,285.8 1181.0,285.5 1181.5,285.2 1182.0,284.9 1182.5,284.6 1183.0,284.4 1183.5,284.1 1184.0,283.8 1184.5,283.6 1185.0,283.3 1185.5,283.1 1186.0,282.8 1186.5,282.6 1187.0,282.4 1187.5,282.1 1188.0,281.9 1188.5,281.7 1189.0,281.4 1189.5,281.2 1190.0,281.0 1190.5,280.8 1191.0,280.6 1191.5,280.4 1192.0,280.2 1192.5,280.0 1193.0,279.8 1193.5,279.6 1194.0,279.4 1194.5,279.2 1195.0,279.0 1195.5,278.9 1196.0,278.7 1196.5,278.5 1197.0,278.3 1197.5,278.2 1198.0,278.0 1198.5,277.9 1199.0,277.7 1199.5,277.5 1200.0,277.4 1200.5,277.2 1201.0,277.1 1201.5,277.0 1202.0,276.8 1202.5,276.7 1203.0,276.5 1203.5,276.4 1204.0,276.3 1204.5,276.1 1205.0,276.0 1205.5,275.9 1206.0,275.8 1206.5,275.6 1207.0,275.5 1207.5,275.4 1208.0,275.3 1208.5,275.2 1209.0,275.1 1209.5,274.9 1210.0,274.8 1210.5,274.7 1211.0,274.6 1211.5,274.5 1212.0,274.4 1212.5,274.3 1213.0,274.2 1213.5,274.1 1214.0,274.0 1214.5,273.9 1215.0,273.9 1215.5,273.8 1216.0,273.7 1216.5,273.6 1217.0,273.5 1217.5,273.4 1218.0,273.3 1218.5,273.3 1219.0,273.2 1219.5,273.1 1220.0,273.0 1220.5,273.0 1221.0,272.9 1221.5,272.8 1222.0,272.7 1222.5,272.7 1223.0,272.6 1223.5,272.5 1224.0,272.5 1224.5,272.4 1225.0,272.3 1225.5,272.3 1226.0,272.2 1226.5,272.1 1227.0,272.1 1227.5,272.0 1228.0,272.0 1228.5,271.9 1229.0,271.9 1229.5,271.8 1230.0,271.7 1230.5,271.7 1231.0,271.6 1231.5,271.6 1232.0,271.5 1232.5,271.5 1233.0,271.4 1233.5,271.4 1234.0,271.4 1234.5,271.3 1235.0,271.3 1235.5,271.2 1236.0,271.2 1236.5,271.1 1237.0,271.1 1237.5,271.0 1238.0,271.0 1238.5,271.0 1239.0,270.9 1239.5,270.9 1240.0,270.8 1240.5,270.8 1241.0,270.8 1241.5,270.7 1242.0,270.7 1242.5,270.7 1243.0,270.6 1243.5,270.6 1244.0,270.6 1244.5,270.5 1245.0,270.5 1245.5,270.5 1246.0,270.4 1246.5,270.4 1247.0,270.4 1247.5,270.4 1248.0,270.3 1248.5,270.3 1249.0,270.3 1249.5,270.2 1250.0,270.2 1250.5,270.2 1251.0,270.2 1251.5,270.1 1252.0,270.1 1252.5,270.1 1253.0,270.1 1253.5,270.0 1254.0,270.0 1254.5,270.0 1255.0,270.0 1255.5,269.9 1256.0,269.9 1256.5,269.9 1257.0,269.9 1257.5,269.9 1258.0,269.8 1258.5,269.8 1259.0,269.8 1259.5,269.8 1260.0,269.8 1260.5,269.7 1261.0,269.7 1261.5,269.7 1262.0,269.7 1262.5,269.7 1263.0,269.7 1263.5,269.6 1264.0,269.6 1264.5,269.6 1265.0,269.6 1265.5,269.6 1266.0,269.6 1266.5,269.5 1267.0,269.5 1267.5,269.5 1268.0,269.5 1268.5,269.5 1269.0,269.5 1269.5,269.5 1270.0,269.4 1270.5,269.4 1271.0,269.4 1271.5,269.4 1272.0,269.4 1272.5,269.4 1273.0,269.4 1273.5,269.4 1274.0,269.4 1274.5,269.3 1275.0,269.3 1275.5,269.3 1276.0,269.3 1276.5,269.3 1277.0,269.3 1277.5,269.3 1278.0,269.3 1278.5,269.3 1279.0,269.2 1279.5,269.2 1280.0,269.2 1280.5,269.2 1281.0,269.2 1281.5,269.2 1282.0,269.2 1282.5,269.2 1283.0,269.2 1283.5,269.2 1284.0,269.2 1284.5,269.2 1285.0,269.1 1285.5,269.1 1286.0,269.1 1286.5,269.1 1287.0,269.1 1287.5,269.1 1288.0,269.1 1288.5,269.1 1289.0,269.1 1289.5,269.1 1290.0,269.1 1290.5,269.1 1291.0,269.1 1291.5,269.1 1292.0,269.0 1292.5,269.0 1293.0,269.0 1293.5,269.0 1294.0,269.0 1294.5,269.0 1295.0,269.0 1295.5,269.0 1296.0,269.0 1296.5,269.0 1297.0,269.0 1297.5,269.0 1298.0,269.0 1298.5,269.0 1299.0,269.0 1299.5,269.0 1300.0,269.0 1300.5,269.0 1301.0,269.0 1301.5,268.9 1302.0,268.9 1302.5,268.9 1303.0,268.9 1303.5,268.9 1304.0,268.9 1304.5,268.9 1305.0,268.9 1305.5,268.9 1306.0,268.9 1306.5,268.9 1307.0,268.9 1307.5,268.9 1308.0,268.9 1308.5,268.9 1309.0,268.9 1309.5,268.9 1310.0,268.9 1310.5,268.9 1311.0,268.9 1311.5,268.9 1312.0,268.9 1312.5,268.9 1313.0,268.9 1313.5,268.9 1314.0,268.9 1314.5,268.9 1315.0,268.9 1315.5,268.9 1316.0,268.8 1316.5,268.8 1317.0,268.8 1317.5,268.8 1318.0,268.8 1318.5,268.8 1319.0,268.8 1319.5,268.8 1320.0,268.8 1320.5,268.8 1321.0,268.8 1321.5,268.8 1322.0,268.8 1322.5,268.8 1323.0,268.8 1323.5,268.8 1324.0,268.8 1324.5,268.8 1325.0,268.8 1325.5,268.8 1326.0,268.8 1326.5,268.8 1327.0,268.8 1327.5,268.8 1328.0,268.8 1328.5,268.8 1329.0,268.8 1329.5,268.8 1330.0,268.8 1330.5,268.8 1331.0,268.8 1331.5,268.8 1332.0,268.8 1332.5,268.8 1333.0,268.8 1333.5,268.8 1334.0,268.8 1334.5,268.8 1335.0,268.8 1335.5,268.8 1336.0,268.8 1336.5,268.8 1337.0,268.8 1337.5,268.8 1338.0,268.8 1338.5,268.8 1339.0,268.8 1339.5,268.8 1340.0,268.8 1340.5,268.8 1341.0,268.8 1341.5,268.8 1342.0,268.8 1342.5,268.8 1343.0,268.8 1343.5,268.8 1344.0,268.8 1344.5,268.8 1345.0,268.8 1345.5,268.8 1346.0,268.8 1346.5,268.8 1347.0,268.8 1347.5,268.7 1348.0,268.7 1348.5,268.7 1349.0,268.7 1349.5,268.7 1350.0,268.7 1350.5,268.7 1351.0,268.7 1351.5,268.7 1352.0,268.7 1352.5,268.7 1353.0,268.7 1353.5,268.7 1354.0,268.7 1354.5,268.7 1355.0,268.7 1355.5,268.7 1356.0,268.7 1356.5,268.7 1357.0,268.7 1357.5,268.7 1358.0,268.7 1358.5,268.7 1359.0,268.7 1359.5,268.7 1360.0,268.7 1360.5,268.7 1361.0,268.7 1361.5,268.7 1362.0,268.7 1362.5,268.7 1363.0,268.7 1363.5,268.7 1364.0,268.7 1364.5,268.7 1365.0,268.7 1365.5,268.7 1366.0,268.7 1366.5,268.7 1367.0,268.7 1367.5,268.7 1368.0,268.7 1368.5,268.7 1369.0,268.7 1369.5,268.7 1370.0,268.7 1370.5,268.7 1371.0,268.7 1371.5,268.7 1372.0,268.7 1372.5,268.7 1373.0,268.7 1373.5,268.7 1374.0,268.7 1374.5,268.7 1375.0,268.7 1375.5,268.7 1376.0,268.7 1376.5,268.7 1377.0,268.7 1377.5,268.7 1378.0,268.7 1378.5,268.7 1379.0,268.7 1379.5,268.7 1380.0,268.7 1380.5,268.7 1381.0,268.7 1381.5,268.7 1382.0,268.7 1382.5,268.7 1383.0,268.7 1383.5,268.7 1384.0,268.7 1384.5,268.7 1385.0,268.7 1385.5,268.7 1386.0,268.7 1386.5,268.7 1387.0,268.7 1387.5,268.7 1388.0,268.7 1388.5,268.7 1389.0,268.7 1389.5,268.7 1390.0,268.7 1390.5,268.7 1391.0,268.7 1391.5,268.7 1392.0,268.7 1392.5,268.7 1393.0,268.7 1393.5,268.7 1394.0,268.7 1394.5,268.7 1395.0,268.7 1395.5,268.7 1396.0,268.7 1396.5,268.7 1397.0,268.7 1397.5,268.7 1398.0,268.7 1398.5,268.7 1399.0,268.7 1399.5,268.7 1400.0,268.7 1400.5,268.7 1401.0,268.7 1401.5,268.7 1402.0,268.7 1402.5,268.7 1403.0,268.7 1403.5,268.7 1404.0,268.7 1404.5,268.7 1405.0,268.7 1405.5,268.7 1406.0,268.7 1406.5,268.7 1407.0,268.7 1407.5,268.7 1408.0,268.7 1408.5,268.7 1409.0,268.7 1409.5,268.7 1410.0,268.7 1410.5,268.7 1411.0,268.7 1411.5,268.7 1412.0,268.7 1412.5,268.7 1413.0,268.7 1413.5,268.7 1414.0,268.7 1414.5,268.7 1415.0,268.7 1415.5,268.7 1416.0,268.7 1416.5,268.7 1417.0,268.7 1417.5,268.7 1418.0,268.7 1418.5,268.7 1419.0,268.7 1419.5,268.7 1420.0,268.7 1420.5,268.7 1421.0,268.7 1421.5,268.7 1422.0,268.7 1422.5,268.7 1423.0,268.7 1423.5,268.7 1424.0,268.7 1424.5,268.7 1425.0,268.7 1425.5,268.7 1426.0,268.7 1426.5,268.7 1427.0,268.7 1427.5,268.7 1428.0,268.7 1428.5,268.7 1429.0,268.7 1429.5,268.7 1430.0,268.7 1430.5,268.7 1431.0,268.7 1431.5,268.7 1432.0,268.7 1432.5,268.7 1433.0,268.7 1433.5,268.7 1434.0,268.7 1434.5,268.7 1435.0,268.7 1435.5,268.7 1436.0,268.7 1436.5,268.7 1437.0,268.7 1437.5,268.7 1438.0,268.7 1438.5,268.7 1439.0,268.7 1439.5,268.7 1440.0,268.7 1440.5,268.7 1441.0,268.7 1441.5,268.7 1442.0,268.7 1442.5,268.7 1443.0,268.7 1443.5,268.7 1444.0,268.7 1444.5,268.7 1445.0,268.7 1445.5,268.7 1446.0,268.7 1446.5,268.7 1447.0,268.7 1447.5,268.7 1448.0,268.7 1448.5,268.7 1449.0,268.7 1449.5,268.7 1450.0,268.7 1450.5,268.7 1451.0,268.7 1451.5,268.7 1452.0,268.7 1452.5,268.7 1453.0,268.7 1453.5,268.7 1454.0,268.7 1454.5,268.7 1455.0,268.7 1455.5,268.7 1456.0,268.7 1456.5,268.7 1457.0,268.7 1457.5,268.7 1458.0,268.7 1458.5,268.7 1459.0,268.7 1459.5,268.7 1460.0,268.7 1460.5,268.7 1461.0,268.7 1461.5,268.7 1462.0,268.7 1462.5,268.7 1463.0,268.7 1463.5,268.7 1464.0,268.7 1464.5,268.7 1465.0,268.7 1465.5,268.7 1466.0,268.7 1466.5,268.7 1467.0,268.7 1467.5,268.7 1468.0,268.7 1468.5,268.7 1469.0,268.7 1469.5,268.7 1470.0,268.7 1470.5,268.7 1471.0,268.7 1471.5,268.7 1472.0,268.7 1472.5,268.7 1473.0,268.7 1473.5,268.7 1474.0,268.7 1474.5,268.7 1475.0,268.7 1475.5,268.7 1476.0,268.7 1476.5,268.7 1477.0,268.7 1477.5,268.7 1478.0,268.7 1478.5,268.7 1479.0,268.7 1479.5,268.7 1480.0,268.7 1480.5,268.7 1481.0,268.7 1481.5,268.7 1482.0,268.7 1482.5,268.7 1483.0,268.7 1483.5,268.7 1484.0,268.7 1484.5,268.7 1485.0,268.7 1485.5,268.7 1486.0,268.7 1486.5,268.7 1487.0,268.7 1487.5,268.7 1488.0,268.7 1488.5,268.7 1489.0,268.7 1489.5,268.7 1490.0,268.7 1490.5,268.7 1491.0,268.7 1491.5,268.7 1492.0,268.7 1492.5,268.7 1493.0,268.7 1493.5,268.7 1494.0,268.7 1494.5,268.7 1495.0,268.7 1495.5,268.7 1496.0,268.7 1496.5,268.7 1497.0,268.7 1497.5,268.7 1498.0,268.7 1498.5,268.7 1499.0,268.7 1499.5,268.7 1500.0,268.7 1500.5,268.7 1501.0,268.7 1501.5,268.7 1502.0,268.7 1502.5,268.7 1503.0,268.7 1503.5,268.7 1504.0,268.7 1504.5,268.7 1505.0,268.7 1505.5,268.7 1506.0,268.7 1506.5,268.7 1507.0,268.7 1507.5,268.7 1508.0,268.7 1508.5,268.7 1509.0,268.7 1509.5,268.7 1510.0,268.7 1510.5,268.7 1511.0,268.7 1511.5,268.7 1512.0,268.7 1512.5,268.7 1513.0,268.7 1513.5,268.7 1514.0,268.7 1514.5,268.7 1515.0,268.7 1515.5,268.7 1516.0,268.7 1516.5,268.7 1517.0,268.7 1517.5,268.7 1518.0,268.7 1518.5,268.7 1519.0,268.7 1519.5,268.7 1520.0,268.7 1520.5,268.7 1521.0,268.7 1521.5,268.7 1522.0,268.7 1522.5,268.7 1523.0,268.7 1523.5,268.7 1524.0,268.7 1524.5,268.7 1525.0,268.7 1525.5,268.7 1526.0,268.7 1526.5,268.7 1527.0,268.7 1527.5,268.7 1528.0,268.7 1528.5,268.7 1529.0,268.7 1529.5,268.7 1530.0,268.7 1530.5,268.7 1531.0,268.7 1531.5,268.7 1532.0,268.7 1532.5,268.7 1533.0,268.7 1533.5,268.7 1534.0,268.7 1534.5,268.8 1535.0,268.8 1535.5,268.8 1536.0,268.8 1536.5,268.8 1537.0,268.8 1537.5,268.8 1538.0,268.8 1538.5,268.8 1539.0,268.8 1539.5,268.8 1540.0,268.8 1540.5,268.8 1541.0,268.8 1541.5,268.8 1542.0,268.8 1542.5,268.8 1543.0,268.8 1543.5,268.8 1544.0,268.8 1544.5,268.8 1545.0,268.8 1545.5,268.8 1546.0,268.8 1546.5,268.8 1547.0,268.8 1547.5,268.8 1548.0,268.8 1548.5,268.8 1549.0,268.8 1549.5,268.8 1550.0,268.9 1550.5,268.9 1551.0,268.9 1551.5,268.9 1552.0,268.9 1552.5,268.9 1553.0,268.9 1553.5,268.9 1554.0,268.9 1554.5,268.9 1555.0,268.9 1555.5,268.9 1556.0,268.9 1556.5,268.9 1557.0,268.9 1557.5,269.0 1558.0,269.0 1558.5,269.0 1559.0,269.0 1559.5,269.0 1560.0,269.0 1560.5,269.0 1561.0,269.0 1561.5,269.0 1562.0,269.1 1562.5,269.1 1563.0,269.1 1563.5,269.1 1564.0,269.1 1564.5,269.1 1565.0,269.1 1565.5,269.2 1566.0,269.2 1566.5,269.2 1567.0,269.2 1567.5,269.2 1568.0,269.2 1568.5,269.3 1569.0,269.3 1569.5,269.3 1570.0,269.3 1570.5,269.3 1571.0,269.4 1571.5,269.4 1572.0,269.4 1572.5,269.4 1573.0,269.5 1573.5,269.5 1574.0,269.5 1574.5,269.5 1575.0,269.6 1575.5,269.6 1576.0,269.6 1576.5,269.7 1577.0,269.7 1577.5,269.7 1578.0,269.8 1578.5,269.8 1579.0,269.9 1579.5,269.9 1580.0,269.9 1580.5,270.0 1581.0,270.0 1581.5,270.1 1582.0,270.1 1582.5,270.2 1583.0,270.2 1583.5,270.3 1584.0,270.3 1584.5,270.4 1585.0,270.5 1585.5,270.5 1586.0,270.6 1586.5,270.7 1587.0,270.7 1587.5,270.8 1588.0,270.9 1588.5,271.0 1589.0,271.0 1589.5,271.1 1590.0,271.2 1590.5,271.3 1591.0,271.4 1591.5,271.5 1592.0,271.6 1592.5,271.7 1593.0,271.8 1593.5,271.9 1594.0,272.0 1594.5,272.1 1595.0,272.3 1595.5,272.4 1596.0,272.5 1596.5,272.7 1597.0,272.8 1597.5,272.9 1598.0,273.1 1598.5,273.3 1599.0,273.4 1599.5,273.6 1600.0,273.8 1600.5,273.9 1601.0,274.1 1601.5,274.3 1602.0,274.5 1602.5,274.7 1603.0,274.9 1603.5,275.2 1604.0,275.4 1604.5,275.6 1605.0,275.9 1605.5,276.1 1606.0,276.4 1606.5,276.7 1607.0,276.9 1607.5,277.2 1608.0,277.5 1608.5,277.8 1609.0,278.2 1609.5,278.5 1610.0,278.9 1610.5,279.2 1611.0,279.6 1611.5,280.0 1612.0,280.4 1612.5,280.8 1613.0,281.2 1613.5,281.6 1614.0,282.1 1614.5,282.6 1615.0,283.1 1615.5,283.6 1616.0,284.1 1616.5,284.6 1617.0,285.2 1617.5,285.8 1618.0,286.4 1618.5,287.0 1619.0,287.6 1619.5,288.3 1620.0,289.0 1620.5,289.7 1621.0,290.4 1621.5,291.2 1622.0,291.9 1622.5,292.8 1623.0,293.6 1623.5,294.5 1624.0,295.4 1624.5,296.3 1625.0,297.2 1625.5,298.2 1626.0,299.2 1626.5,300.3 1627.0,301.4 1627.5,302.5 1628.0,303.7 1628.5,304.9 1629.0,306.1 1629.5,307.4 1630.0,308.7 1630.5,310.1 1631.0,311.5 1631.5,313.0 1632.0,314.5 1632.5,316.0 1633.0,317.6 1633.5,319.3 1634.0,321.0 1634.5,322.8 1635.0,324.6 1635.5,326.5 1636.0,328.4 1636.5,330.4 1637.0,332.5 1637.5,334.6 1638.0,336.8 1638.5,339.0 1639.0,341.4 1639.5,343.8 1640.0,346.2 1640.5,348.8 1641.0,351.4 1641.5,354.1 1642.0,356.9 1642.5,359.7 1643.0,362.7 1643.5,365.7 1644.0,368.8 1644.5,372.0 1645.0,375.3 1645.5,378.7 1646.0,382.2 1646.5,385.8 1647.0,389.5 1647.5,393.3 1648.0,397.1 1648.5,401.1 1649.0,405.2 1649.5,409.4 1650.0,413.7 1650.5,418.2 1651.0,422.7 1651.5,427.4 1652.0,432.1 1652.5,437.0 1653.0,442.0 1653.5,447.2 1654.0,452.4 1654.5,457.8 1655.0,463.3 1655.5,469.0 1656.0,474.7 1656.5,480.6 1657.0,486.7 1657.5,492.8 1658.0,499.1 1658.5,505.6 1659.0,512.1 1659.5,518.8 1660.0,525.7 1660.5,532.7" fill="none" stroke="#0000ff" stroke-width="1"/><text x="1093.5" y="190.5" fill="#0000ff" text-anchor="end" >-6.750</text><text x="1093.5" y="269" fill="#0000ff" text-anchor="end" >-7.500</text><text x="1093.5" y="348.5" fill="#0000ff" text-anchor="end" >-8.250</text><text x="1093.5" y="428" fill="#0000ff" text-anchor="end" >-9.000</text><text x="1093.5" y="508" fill="#0000ff" text-anchor="end" >-9.750</text><text x="1093.5" y="587.5" fill="#0000ff" text-anchor="end" >-10.500</text><text x="1097" y="594.5" fill="#0000ff" text-anchor="start" >1</text><text x="1227.5" y="594.5" fill="#0000ff" text-anchor="middle" >10</text><text x="1358.5" y="594.5" fill="#0000ff" text-anchor="middle" >100</text><text x="1490" y="594.5" fill="#0000ff" text-anchor="middle" >1K</text><text x="1622" y="594.5" fill="#0000ff" text-anchor="middle" >10K</text><text x="1661" y="594.5" fill="#0000ff" text-anchor="middle" >20K</text><text x="1378.5" y="183" fill="#0000ff" text-anchor="middle" letter-spacing=".2">circuit97.cir</text><text x="1096" y="607.5" fill="#0000ff" text-anchor="start" text-decoration="underline">db(v(B,C))</text><text x="1326.5" y="620" fill="#0000ff" text-anchor="middle" >F (Hz)</text></svg>
<svg class="a" style="left:0;top:0" width="1698" height="689" shape-rendering="crispEdges"><rect x="1052" y="629" width="637" height="17" fill="#f0f0f0"/><path d="M1184 628.5H1671" stroke="#000"/><rect x="1052" y="629" width="7" height="16" fill="#e8e8e8"/><path d="M1052.5 629V645" stroke="#ffffff"/><rect x="1059" y="628" width="16" height="16" fill="#6d6d6d"/><rect x="1061" y="629" width="12" height="13" fill="#f0f0f0"/><path d="M1061 629.5H1073" stroke="#ffffff"/><path d="M1061.5 629V642" stroke="#ffffff"/><polygon points="1064.0,637.0 1070.0,637.0 1067.0,640.0" fill="#000"/><rect x="1075" y="628" width="16" height="16" fill="#6d6d6d"/><rect x="1077" y="629" width="12" height="13" fill="#f0f0f0"/><path d="M1077 629.5H1089" stroke="#ffffff"/><path d="M1077.5 629V642" stroke="#ffffff"/><path d="M1079.5 632V640" stroke="#000"/><polygon points="1086.0,631.5 1086.0,640.5 1080.0,636.0" fill="#000"/><rect x="1091" y="628" width="16" height="16" fill="#6d6d6d"/><rect x="1093" y="629" width="12" height="13" fill="#f0f0f0"/><path d="M1093 629.5H1105" stroke="#ffffff"/><path d="M1093.5 629V642" stroke="#ffffff"/><polygon points="1101.5,631.5 1101.5,640.5 1096.5,636.0" fill="#000"/><rect x="1107" y="628" width="16" height="16" fill="#6d6d6d"/><rect x="1109" y="629" width="12" height="13" fill="#f0f0f0"/><path d="M1109 629.5H1121" stroke="#ffffff"/><path d="M1109.5 629V642" stroke="#ffffff"/><polygon points="1112.5,631.5 1112.5,640.5 1117.5,636.0" fill="#000"/><rect x="1123" y="628" width="16" height="16" fill="#6d6d6d"/><rect x="1125" y="629" width="12" height="13" fill="#f0f0f0"/><path d="M1125 629.5H1137" stroke="#ffffff"/><path d="M1125.5 629V642" stroke="#ffffff"/><polygon points="1128.0,631.5 1128.0,640.5 1134.0,636.0" fill="#000"/><path d="M1134.5 632V640" stroke="#000"/><polygon points="1140,628 1184,628 1176,644.5 1148,644.5" fill="#f8f8f8"/><path d="M1140.5 628.5L1148.5 644.5" stroke="#000" stroke-width="1.2" shape-rendering="auto"/><path d="M1176.5 644.5L1184.5 628.5" stroke="#000" stroke-width="1.2" shape-rendering="auto"/><path d="M1140 645.5H1185" stroke="#f8f8f8"/><text x="1148.5" y="641" fill="#000" font-size="11.5" font-weight="bold" font-family="Liberation Sans">Main</text><rect x="1670" y="629" width="17" height="6" fill="#f0f0f0"/><path d="M1670 629.5H1687" stroke="#ffffff"/><path d="M1670.5 629V635" stroke="#ffffff"/><path d="M1670 634.5H1687" stroke="#a0a0a0"/><path d="M1686.5 629V635" stroke="#a0a0a0"/><path d="M1671 633.5H1686" stroke="#e3e3e3"/><path d="M1685.5 630V634" stroke="#e3e3e3"/></svg>
<svg class="a" style="left:0;top:0" width="1698" height="172" shape-rendering="crispEdges"><defs><pattern id="acdith" width="2" height="2" patternUnits="userSpaceOnUse"><rect width="1" height="1" fill="#e0e0e0"/><rect x="1" y="1" width="1" height="1" fill="#e0e0e0"/></pattern>
<linearGradient id="acginact" x1="0" y1="0" x2="0" y2="1"><stop offset="0" stop-color="#d5e0ec"/><stop offset=".5" stop-color="#c7d5e5"/><stop offset=".51" stop-color="#b9c9dc"/><stop offset="1" stop-color="#c5d4e5"/></linearGradient>
<linearGradient id="acgact" x1="0" y1="0" x2="0" y2="1"><stop offset="0" stop-color="#c5d7ec"/><stop offset=".5" stop-color="#b0c6df"/><stop offset=".51" stop-color="#95b0d0"/><stop offset="1" stop-color="#b9d0ea"/></linearGradient>
<linearGradient id="acgred" x1="0" y1="0" x2="0" y2="1"><stop offset="0" stop-color="#e8a092"/><stop offset=".5" stop-color="#d46f5c"/><stop offset=".51" stop-color="#c0452c"/><stop offset="1" stop-color="#d8806a"/></linearGradient>
</defs><rect x="1588.5" y="66.5" width="30" height="17" rx="3" fill="url(#acgact)" stroke="#5d7491" shape-rendering="auto"/><rect x="1589.5" y="67.5" width="28" height="15" rx="2" fill="none" stroke="#ffffff" stroke-opacity=".45" shape-rendering="auto"/><rect x="1598.5" y="75.5" width="10" height="4" rx="1" fill="#fff" stroke="#3c4a5c" shape-rendering="auto"/><rect x="1621.5" y="66.5" width="31" height="17" rx="3" fill="url(#acgact)" stroke="#5d7491" shape-rendering="auto"/><rect x="1622.5" y="67.5" width="29" height="15" rx="2" fill="none" stroke="#ffffff" stroke-opacity=".45" shape-rendering="auto"/><rect x="1632.0" y="70.5" width="10" height="9" rx="1.5" fill="#fff" stroke="#3c4a5c" shape-rendering="auto"/><rect x="1634.5" y="73.0" width="5" height="3" fill="#7890b0" stroke="#3c4a5c" shape-rendering="auto"/><rect x="1655.5" y="66.5" width="31" height="17" rx="3" fill="url(#acgred)" stroke="#5a1a10" shape-rendering="auto"/><rect x="1656.5" y="67.5" width="29" height="15" rx="2" fill="none" stroke="#ffffff" stroke-opacity=".45" shape-rendering="auto"/><path d="M1667.0 71.0L1675.0 78.0M1675.0 71.0L1667.0 78.0" stroke="#3c3c3c" stroke-width="4.5" stroke-linecap="round" shape-rendering="auto"/><path d="M1667.0 71.0L1675.0 78.0M1675.0 71.0L1667.0 78.0" stroke="#fff" stroke-width="2.6" stroke-linecap="round" shape-rendering="auto"/><rect x="1053.5" y="67.5" width="16" height="15" fill="#fff" stroke="#000" stroke-width="1"/><rect x="1054" y="68" width="15" height="3" fill="#0000a0"/><rect x="1055" y="72" width="13" height="9" fill="#00b0c0"/><polyline points="1056,79 1059,75 1062,77 1066,74" fill="none" stroke="#004060" stroke-width="1" /><text x="1073" y="80" fill="#000" font-size="12.5" letter-spacing="-0.45" font-family="Liberation Sans">AC Analysis</text><path d="M1056 115.5H1685" stroke="#a0a0a0"/><path d="M1056 116.5H1685" stroke="#ffffff"/><path d="M1056 141.5H1685" stroke="#a0a0a0"/><path d="M1056 142.5H1685" stroke="#ffffff"/><polygon points="1061,96 1061,106.0 1063.5,104.0 1065.5,109.0 1067.5,108.0 1065.5,103.5 1069.0,103.5" fill="#000"/><polyline points="1081,102 1087,96" fill="none" stroke="#000" stroke-width="1.2" /><rect x="1089.5" y="95.5" width="6" height="6" fill="none" stroke="#000" stroke-width="1"/><polygon points="1084,103 1088,106.5 1084,110 1080.5,106.5" fill="none"/><polygon points="1084,103 1087.5,106.5 1084,110 1080.5,106.5" fill="none" stroke="#000" shape-rendering="auto"/><circle cx="1093" cy="106.5" r="3.4" fill="none" stroke="#000" shape-rendering="auto"/><polygon points="1104,101 1112,101 1108,105" fill="#000"/><rect x="1115" y="92" width="23" height="21" fill="#f7f7f7"/><path d="M1115 92.5H1138" stroke="#c8c8c8"/><path d="M1115.5 92V113" stroke="#c8c8c8"/><path d="M1115 112.5H1138" stroke="#fcfcfc"/><path d="M1137.5 92V113" stroke="#fcfcfc"/><rect x="1119" y="97" width="1" height="1" fill="#000"/><rect x="1119" y="107" width="1" height="1" fill="#000"/><rect x="1121" y="97" width="1" height="1" fill="#000"/><rect x="1121" y="107" width="1" height="1" fill="#000"/><rect x="1123" y="97" width="1" height="1" fill="#000"/><rect x="1123" y="107" width="1" height="1" fill="#000"/><rect x="1125" y="97" width="1" height="1" fill="#000"/><rect x="1125" y="107" width="1" height="1" fill="#000"/><rect x="1127" y="97" width="1" height="1" fill="#000"/><rect x="1127" y="107" width="1" height="1" fill="#000"/><rect x="1129" y="97" width="1" height="1" fill="#000"/><rect x="1129" y="107" width="1" height="1" fill="#000"/><rect x="1131" y="97" width="1" height="1" fill="#000"/><rect x="1131" y="107" width="1" height="1" fill="#000"/><rect x="1133" y="97" width="1" height="1" fill="#000"/><rect x="1133" y="107" width="1" height="1" fill="#000"/><rect x="1119" y="97" width="1" height="1" fill="#000"/><rect x="1119" y="99" width="1" height="1" fill="#000"/><rect x="1119" y="101" width="1" height="1" fill="#000"/><rect x="1119" y="103" width="1" height="1" fill="#000"/><rect x="1119" y="105" width="1" height="1" fill="#000"/><path d="M1120 107 C1124 110 1126 108 1128 102 C1130 96 1133 96 1135 100" fill="none" stroke="#0000c0" stroke-width="1.2" shape-rendering="auto"/><path d="M1141 101 C1143 94 1146 94 1148 101 C1150 96 1152 96 1153 101 C1154 98 1156 98 1157 101" fill="none" stroke="#0000c0" stroke-width="1.2" shape-rendering="auto"/><path d="M1141 104.5H1158" stroke="#000"/><path d="M1143 107.5H1149" stroke="#000"/><path d="M1150 107.5H1157" stroke="#000"/><path d="M1143 109.5H1149" stroke="#000"/><path d="M1150 109.5H1157" stroke="#000"/><polyline points="1164.5,95 1164.5,100.5 1179.5,100.5 1179.5,95" fill="none" stroke="#0000a0" stroke-width="1" /><path d="M1165.5 101V110" stroke="#000"/><path d="M1179.5 101V110" stroke="#000"/><path d="M1166 107.5H1179" stroke="#000"/><text x="1172" y="109" fill="#000" font-size="6" font-weight="bold" font-family="Liberation Sans" text-anchor="middle" >H0</text><path d="M1190 109 C1194 109 1195 96 1199 96 H1203" fill="none" stroke="#0000a0" stroke-width="1.2" shape-rendering="auto"/><rect x="1187" y="96" width="1" height="1" fill="#000"/><rect x="1187" y="98" width="1" height="1" fill="#000"/><rect x="1187" y="100" width="1" height="1" fill="#000"/><rect x="1187" y="102" width="1" height="1" fill="#000"/><rect x="1187" y="104" width="1" height="1" fill="#000"/><rect x="1187" y="106" width="1" height="1" fill="#000"/><rect x="1187" y="108" width="1" height="1" fill="#000"/><rect x="1189" y="96" width="1" height="1" fill="#000"/><rect x="1189" y="109" width="1" height="1" fill="#000"/><rect x="1191" y="96" width="1" height="1" fill="#000"/><rect x="1191" y="109" width="1" height="1" fill="#000"/><rect x="1193" y="96" width="1" height="1" fill="#000"/><rect x="1193" y="109" width="1" height="1" fill="#000"/><rect x="1195" y="96" width="1" height="1" fill="#000"/><rect x="1195" y="109" width="1" height="1" fill="#000"/><rect x="1197" y="96" width="1" height="1" fill="#000"/><rect x="1197" y="109" width="1" height="1" fill="#000"/><rect x="1199" y="96" width="1" height="1" fill="#000"/><rect x="1199" y="109" width="1" height="1" fill="#000"/><text x="1190" y="105" fill="#000" font-size="5" font-weight="bold" font-family="Liberation Sans" text-anchor="start" >10</text><polyline points="1210,109.5 1216.5,109.5 1216.5,104.5 1226,104.5" fill="none" stroke="#0000c0" stroke-width="1.2" /><polyline points="1214,104 1220,98" fill="none" stroke="#000" stroke-width="1" /><polygon points="1213,105 1213,101 1217,105" fill="#000"/><text x="1222" y="101" fill="#000" font-size="6" font-weight="bold" font-family="Liberation Sans" text-anchor="middle" >1.0</text><text x="1241" y="102" fill="#800000" font-size="7" font-weight="bold" font-family="Liberation Sans" text-anchor="middle" >F()</text><path d="M1235 109 C1238 103 1244 103 1249 108" fill="none" stroke="#0000c0" stroke-width="1.2" shape-rendering="auto"/><rect x="1235" y="96" width="1" height="1" fill="#000"/><rect x="1249" y="96" width="1" height="1" fill="#000"/><rect x="1235" y="98" width="1" height="1" fill="#000"/><rect x="1249" y="98" width="1" height="1" fill="#000"/><rect x="1235" y="100" width="1" height="1" fill="#000"/><rect x="1249" y="100" width="1" height="1" fill="#000"/><rect x="1235" y="102" width="1" height="1" fill="#000"/><rect x="1249" y="102" width="1" height="1" fill="#000"/><rect x="1235" y="104" width="1" height="1" fill="#000"/><rect x="1249" y="104" width="1" height="1" fill="#000"/><rect x="1235" y="106" width="1" height="1" fill="#000"/><rect x="1249" y="106" width="1" height="1" fill="#000"/><rect x="1235" y="108" width="1" height="1" fill="#000"/><rect x="1249" y="108" width="1" height="1" fill="#000"/><text x="1264" y="110" fill="#000" font-size="18" font-weight="bold" font-family="Liberation Serif" text-anchor="middle" >T</text><path d="M1278.5 94V112" stroke="#a0a0a0"/><path d="M1279.5 94V112" stroke="#ffffff"/><rect x="1284.5" y="99.5" width="11" height="10" fill="#fff" stroke="#000"/><path d="M1286 103.5H1294" stroke="#000"/><path d="M1286 106.5H1294" stroke="#000"/><polygon points="1289,99 1294,96 1299,98 1295,102" fill="#fff"/><polyline points="1289,99 1294,96 1299,98" fill="none" stroke="#000" stroke-width="1" /><rect x="1298" y="96" width="3" height="6" fill="#000080"/><path d="M1306.5 94V112" stroke="#a0a0a0"/><path d="M1307.5 94V112" stroke="#ffffff"/><polygon points="1314,97 1326,102.5 1314,108" fill="#000"/><rect x="1337" y="97" width="12" height="12" fill="#a0a0a0"/><rect x="1361" y="97" width="4" height="12" fill="#a0a0a0"/><rect x="1369" y="97" width="4" height="12" fill="#a0a0a0"/><path d="M1380.5 94V112" stroke="#a0a0a0"/><path d="M1381.5 94V112" stroke="#ffffff"/><polyline points="1386,109 1398,97.5 1402,97.5" fill="none" stroke="#000" stroke-width="1.1" /><rect x="1389" y="104" width="2" height="2" fill="#000"/><rect x="1394" y="100" width="2" height="2" fill="#000"/><polyline points="1411,107 1422,96" fill="none" stroke="#000" stroke-width="1.1" /><rect x="1409.5" y="106.5" width="2" height="2" fill="none" stroke="#000" stroke-width="1"/><rect x="1415.5" y="101.5" width="2" height="2" fill="none" stroke="#000" stroke-width="1"/><rect x="1421.5" y="95.5" width="2" height="2" fill="none" stroke="#000" stroke-width="1"/><path d="M1431.5 94V112" stroke="#a0a0a0"/><path d="M1432.5 94V112" stroke="#ffffff"/><rect x="1437.5" y="95.5" width="15" height="14" fill="none" stroke="#000" stroke-width="1"/><rect x="1439" y="96" width="1" height="1" fill="#000"/><rect x="1439" y="108" width="1" height="1" fill="#000"/><rect x="1441" y="96" width="1" height="1" fill="#000"/><rect x="1441" y="108" width="1" height="1" fill="#000"/><rect x="1443" y="96" width="1" height="1" fill="#000"/><rect x="1443" y="108" width="1" height="1" fill="#000"/><rect x="1445" y="96" width="1" height="1" fill="#000"/><rect x="1445" y="108" width="1" height="1" fill="#000"/><rect x="1447" y="96" width="1" height="1" fill="#000"/><rect x="1447" y="108" width="1" height="1" fill="#000"/><rect x="1449" y="96" width="1" height="1" fill="#000"/><rect x="1449" y="108" width="1" height="1" fill="#000"/><rect x="1438" y="97" width="1" height="1" fill="#000"/><rect x="1451" y="97" width="1" height="1" fill="#000"/><rect x="1438" y="99" width="1" height="1" fill="#000"/><rect x="1451" y="99" width="1" height="1" fill="#000"/><rect x="1438" y="101" width="1" height="1" fill="#000"/><rect x="1451" y="101" width="1" height="1" fill="#000"/><rect x="1438" y="103" width="1" height="1" fill="#000"/><rect x="1451" y="103" width="1" height="1" fill="#000"/><rect x="1438" y="105" width="1" height="1" fill="#000"/><rect x="1451" y="105" width="1" height="1" fill="#000"/><rect x="1438" y="107" width="1" height="1" fill="#000"/><rect x="1451" y="107" width="1" height="1" fill="#000"/><rect x="1437" y="95" width="16" height="2" fill="#000"/><rect x="1437" y="108" width="16" height="2" fill="#000"/><rect x="1460.5" y="95.5" width="15" height="14" fill="none" stroke="#000" stroke-width="1.2"/><rect x="1464" y="99" width="3" height="1" fill="#000"/><rect x="1465" y="98" width="1" height="3" fill="#000"/><rect x="1464" y="103" width="3" height="1" fill="#000"/><rect x="1465" y="102" width="1" height="3" fill="#000"/><rect x="1464" y="106" width="3" height="1" fill="#000"/><rect x="1465" y="105" width="1" height="3" fill="#000"/><rect x="1469" y="99" width="3" height="1" fill="#000"/><rect x="1470" y="98" width="1" height="3" fill="#000"/><rect x="1469" y="103" width="3" height="1" fill="#000"/><rect x="1470" y="102" width="1" height="3" fill="#000"/><rect x="1469" y="106" width="3" height="1" fill="#000"/><rect x="1470" y="105" width="1" height="3" fill="#000"/><path d="M1482.5 94V112" stroke="#a0a0a0"/><path d="M1483.5 94V112" stroke="#ffffff"/><rect x="1485" y="92" width="23" height="21" fill="#f7f7f7"/><path d="M1485 92.5H1508" stroke="#c8c8c8"/><path d="M1485.5 92V113" stroke="#c8c8c8"/><path d="M1485 112.5H1508" stroke="#fcfcfc"/><path d="M1507.5 92V113" stroke="#fcfcfc"/><rect x="1508" y="92" width="23" height="21" fill="#f7f7f7"/><path d="M1508 92.5H1531" stroke="#c8c8c8"/><path d="M1508.5 92V113" stroke="#c8c8c8"/><path d="M1508 112.5H1531" stroke="#fcfcfc"/><path d="M1530.5 92V113" stroke="#fcfcfc"/><rect x="1531" y="92" width="23" height="21" fill="#f7f7f7"/><path d="M1531 92.5H1554" stroke="#c8c8c8"/><path d="M1531.5 92V113" stroke="#c8c8c8"/><path d="M1531 112.5H1554" stroke="#fcfcfc"/><path d="M1553.5 92V113" stroke="#fcfcfc"/><rect x="1489.5" y="96.5" width="15" height="13" fill="none" stroke="#000" stroke-width="1.2"/><path d="M1491.5 97V109" stroke="#000"/><path d="M1493.5 97V109" stroke="#000"/><path d="M1495.5 97V109" stroke="#000"/><path d="M1497.5 97V109" stroke="#000"/><path d="M1499.5 97V109" stroke="#000"/><path d="M1501.5 97V109" stroke="#000"/><rect x="1512.5" y="96.5" width="15" height="13" fill="none" stroke="#000" stroke-width="1.2"/><path d="M1513 98.5H1527" stroke="#000"/><path d="M1513 100.5H1527" stroke="#000"/><path d="M1513 102.5H1527" stroke="#000"/><path d="M1513 104.5H1527" stroke="#000"/><path d="M1513 106.5H1527" stroke="#000"/><rect x="1535.5" y="96.5" width="15" height="13" fill="none" stroke="#000" stroke-width="1.2"/><path d="M1538.5 97V109" stroke="#000"/><rect x="1540" y="98" width="1" height="1" fill="#000"/><rect x="1540" y="100" width="1" height="1" fill="#000"/><rect x="1540" y="102" width="1" height="1" fill="#000"/><rect x="1540" y="104" width="1" height="1" fill="#000"/><rect x="1540" y="106" width="1" height="1" fill="#000"/><rect x="1542" y="98" width="1" height="1" fill="#000"/><rect x="1542" y="100" width="1" height="1" fill="#000"/><rect x="1542" y="102" width="1" height="1" fill="#000"/><rect x="1542" y="104" width="1" height="1" fill="#000"/><rect x="1542" y="106" width="1" height="1" fill="#000"/><rect x="1544" y="98" width="1" height="1" fill="#000"/><rect x="1544" y="100" width="1" height="1" fill="#000"/><rect x="1544" y="102" width="1" height="1" fill="#000"/><rect x="1544" y="104" width="1" height="1" fill="#000"/><rect x="1544" y="106" width="1" height="1" fill="#000"/><rect x="1546" y="98" width="1" height="1" fill="#000"/><rect x="1546" y="100" width="1" height="1" fill="#000"/><rect x="1546" y="102" width="1" height="1" fill="#000"/><rect x="1546" y="104" width="1" height="1" fill="#000"/><rect x="1546" y="106" width="1" height="1" fill="#000"/><rect x="1548" y="98" width="1" height="1" fill="#000"/><rect x="1548" y="100" width="1" height="1" fill="#000"/><rect x="1548" y="102" width="1" height="1" fill="#000"/><rect x="1548" y="104" width="1" height="1" fill="#000"/><rect x="1548" y="106" width="1" height="1" fill="#000"/><rect x="1557.5" y="96.5" width="15" height="13" fill="none" stroke="#000" stroke-width="1.2"/><rect x="1561" y="98" width="1" height="1" fill="#000"/><rect x="1561" y="100" width="1" height="1" fill="#000"/><rect x="1561" y="102" width="1" height="1" fill="#000"/><rect x="1561" y="104" width="1" height="1" fill="#000"/><rect x="1561" y="106" width="1" height="1" fill="#000"/><rect x="1565" y="98" width="1" height="1" fill="#000"/><rect x="1565" y="100" width="1" height="1" fill="#000"/><rect x="1565" y="102" width="1" height="1" fill="#000"/><rect x="1565" y="104" width="1" height="1" fill="#000"/><rect x="1565" y="106" width="1" height="1" fill="#000"/><rect x="1569" y="98" width="1" height="1" fill="#000"/><rect x="1569" y="100" width="1" height="1" fill="#000"/><rect x="1569" y="102" width="1" height="1" fill="#000"/><rect x="1569" y="104" width="1" height="1" fill="#000"/><rect x="1569" y="106" width="1" height="1" fill="#000"/><path d="M1579.5 94V112" stroke="#a0a0a0"/><path d="M1580.5 94V112" stroke="#ffffff"/><rect x="1585.5" y="96.5" width="15" height="13" fill="none" stroke="#000" stroke-width="1.2"/><path d="M1586 105.5H1600" stroke="#000"/><rect x="1607" y="104" width="1" height="1" fill="#000"/><rect x="1609" y="104" width="1" height="1" fill="#000"/><rect x="1611" y="104" width="1" height="1" fill="#000"/><rect x="1613" y="104" width="1" height="1" fill="#000"/><rect x="1615" y="104" width="1" height="1" fill="#000"/><rect x="1617" y="104" width="1" height="1" fill="#000"/><rect x="1619" y="104" width="1" height="1" fill="#000"/><rect x="1621" y="104" width="1" height="1" fill="#000"/><rect x="1623" y="104" width="1" height="1" fill="#000"/><rect x="1612" y="96" width="1" height="1" fill="#000"/><rect x="1612" y="98" width="1" height="1" fill="#000"/><rect x="1612" y="100" width="1" height="1" fill="#000"/><rect x="1612" y="102" width="1" height="1" fill="#000"/><rect x="1612" y="104" width="1" height="1" fill="#000"/><rect x="1612" y="106" width="1" height="1" fill="#000"/><rect x="1612" y="108" width="1" height="1" fill="#000"/><polyline points="1607,106 1624,98" fill="none" stroke="#0000ff" stroke-width="1.2" /><path d="M1630.5 94V112" stroke="#a0a0a0"/><path d="M1631.5 94V112" stroke="#ffffff"/><path d="M1059 136 C1064 134 1066 124 1071 122" fill="none" stroke="#0000ff" stroke-width="1.2" shape-rendering="auto"/><rect x="1066" y="121" width="1" height="1" fill="#000"/><rect x="1066" y="123" width="1" height="1" fill="#000"/><rect x="1066" y="125" width="1" height="1" fill="#000"/><rect x="1066" y="127" width="1" height="1" fill="#000"/><rect x="1066" y="129" width="1" height="1" fill="#000"/><rect x="1066" y="131" width="1" height="1" fill="#000"/><rect x="1066" y="133" width="1" height="1" fill="#000"/><rect x="1066" y="135" width="1" height="1" fill="#000"/><path d="M1058 128.5H1066" stroke="#000"/><polygon points="1063,125 1066,128 1063,131" fill="#000"/><path d="M1080 134 C1086 134 1090 133 1096 127" fill="none" stroke="#0000ff" stroke-width="1.2" shape-rendering="auto"/><rect x="1088" y="121" width="1" height="1" fill="#000"/><rect x="1088" y="123" width="1" height="1" fill="#000"/><rect x="1088" y="125" width="1" height="1" fill="#000"/><rect x="1088" y="127" width="1" height="1" fill="#000"/><rect x="1088" y="129" width="1" height="1" fill="#000"/><rect x="1088" y="131" width="1" height="1" fill="#000"/><rect x="1088" y="133" width="1" height="1" fill="#000"/><rect x="1088" y="135" width="1" height="1" fill="#000"/><polygon points="1085,128 1091,128 1088,132" fill="#000"/><path d="M1088.5 123V129" stroke="#000"/><path d="M1103 134 C1109 134 1113 133 1119 127" fill="none" stroke="#0000ff" stroke-width="1.2" shape-rendering="auto"/><rect x="1110" y="121" width="1" height="1" fill="#000"/><rect x="1114" y="121" width="1" height="1" fill="#000"/><rect x="1110" y="123" width="1" height="1" fill="#000"/><rect x="1114" y="123" width="1" height="1" fill="#000"/><rect x="1110" y="125" width="1" height="1" fill="#000"/><rect x="1114" y="125" width="1" height="1" fill="#000"/><rect x="1110" y="127" width="1" height="1" fill="#000"/><rect x="1114" y="127" width="1" height="1" fill="#000"/><rect x="1110" y="129" width="1" height="1" fill="#000"/><rect x="1114" y="129" width="1" height="1" fill="#000"/><rect x="1110" y="131" width="1" height="1" fill="#000"/><rect x="1114" y="131" width="1" height="1" fill="#000"/><rect x="1110" y="133" width="1" height="1" fill="#000"/><rect x="1114" y="133" width="1" height="1" fill="#000"/><rect x="1110" y="135" width="1" height="1" fill="#000"/><rect x="1114" y="135" width="1" height="1" fill="#000"/><polygon points="1107,127 1113,127 1110,131" fill="#000"/><polygon points="1111,126 1117,126 1114,130" fill="#000"/><path d="M1126 124 H1131 L1136 129 H1142 M1126 127 H1130 L1135 132 H1142 M1126 130 H1129 L1134 135 H1142" fill="none" stroke="#b8b8b8" shape-rendering="auto"/><path d="M1148.5 120V138" stroke="#a0a0a0"/><path d="M1149.5 120V138" stroke="#ffffff"/><rect x="1154.5" y="122.5" width="15" height="12" fill="#fff" stroke="#000080" stroke-width="1.2"/><path d="M1156 130 C1159 126 1162 125 1167 126" fill="none" stroke="#0000ff" shape-rendering="auto"/><path d="M1156 132 H1161 L1163 129 H1168" fill="none" stroke="#ff0000" shape-rendering="auto"/><polygon points="1158,131 1164,124 1167,126 1161,133" fill="#000"/><polygon points="1160,131 1164,126.5 1165,127.5 1161,132" fill="#fff"/><path d="M1176.5 120V138" stroke="#a0a0a0"/><path d="M1177.5 120V138" stroke="#ffffff"/><rect x="1179" y="118" width="23" height="21" fill="#f7f7f7"/><path d="M1179 118.5H1202" stroke="#c8c8c8"/><path d="M1179.5 118V139" stroke="#c8c8c8"/><path d="M1179 138.5H1202" stroke="#fcfcfc"/><path d="M1201.5 118V139" stroke="#fcfcfc"/><rect x="1190" y="121" width="1" height="1" fill="#000"/><rect x="1190" y="123" width="1" height="1" fill="#000"/><rect x="1190" y="125" width="1" height="1" fill="#000"/><rect x="1190" y="127" width="1" height="1" fill="#000"/><rect x="1190" y="129" width="1" height="1" fill="#000"/><rect x="1190" y="131" width="1" height="1" fill="#000"/><rect x="1190" y="133" width="1" height="1" fill="#000"/><rect x="1190" y="135" width="1" height="1" fill="#000"/><path d="M1183 128.5H1198" stroke="#0000ff"/><rect x="1183" y="127" width="3" height="3" fill="#0000ff"/><rect x="1189" y="127" width="3" height="3" fill="#0000ff"/><rect x="1195" y="127" width="3" height="3" fill="#0000ff"/><rect x="1213" y="121" width="1" height="1" fill="#000"/><rect x="1213" y="123" width="1" height="1" fill="#000"/><rect x="1213" y="125" width="1" height="1" fill="#000"/><rect x="1213" y="127" width="1" height="1" fill="#000"/><rect x="1213" y="129" width="1" height="1" fill="#000"/><rect x="1213" y="131" width="1" height="1" fill="#000"/><rect x="1213" y="133" width="1" height="1" fill="#000"/><rect x="1213" y="135" width="1" height="1" fill="#000"/><path d="M1205 128.5H1222" stroke="#0000ff"/><rect x="1205" y="127" width="3" height="3" fill="#0000ff"/><rect x="1219" y="127" width="3" height="3" fill="#0000ff"/><rect x="1236" y="122" width="1" height="1" fill="#000"/><rect x="1236" y="124" width="1" height="1" fill="#000"/><rect x="1236" y="126" width="1" height="1" fill="#000"/><rect x="1236" y="128" width="1" height="1" fill="#000"/><rect x="1236" y="130" width="1" height="1" fill="#000"/><rect x="1236" y="132" width="1" height="1" fill="#000"/><rect x="1236" y="134" width="1" height="1" fill="#000"/><rect x="1236" y="136" width="1" height="1" fill="#000"/><path d="M1228 136 C1232 132 1233 122 1236 122 C1239 122 1240 132 1244 136" fill="none" stroke="#0000ff" stroke-width="1.2" shape-rendering="auto"/><rect x="1259" y="121" width="1" height="1" fill="#000"/><rect x="1259" y="123" width="1" height="1" fill="#000"/><rect x="1259" y="125" width="1" height="1" fill="#000"/><rect x="1259" y="127" width="1" height="1" fill="#000"/><rect x="1259" y="129" width="1" height="1" fill="#000"/><rect x="1259" y="131" width="1" height="1" fill="#000"/><rect x="1259" y="133" width="1" height="1" fill="#000"/><rect x="1259" y="135" width="1" height="1" fill="#000"/><path d="M1251 122 C1255 126 1256 136 1259 136 C1262 136 1263 126 1267 122" fill="none" stroke="#0000ff" stroke-width="1.2" shape-rendering="auto"/><rect x="1285" y="121" width="1" height="1" fill="#000"/><rect x="1285" y="123" width="1" height="1" fill="#000"/><rect x="1285" y="125" width="1" height="1" fill="#000"/><rect x="1285" y="127" width="1" height="1" fill="#000"/><rect x="1285" y="129" width="1" height="1" fill="#000"/><rect x="1285" y="131" width="1" height="1" fill="#000"/><rect x="1285" y="133" width="1" height="1" fill="#000"/><rect x="1285" y="135" width="1" height="1" fill="#000"/><path d="M1274 134 C1277 131 1279 135 1281 131 C1283 126 1284 122 1285 122 C1287 122 1288 130 1290 134" fill="none" stroke="#0000ff" stroke-width="1.2" shape-rendering="auto"/><rect x="1308" y="121" width="1" height="1" fill="#000"/><rect x="1308" y="123" width="1" height="1" fill="#000"/><rect x="1308" y="125" width="1" height="1" fill="#000"/><rect x="1308" y="127" width="1" height="1" fill="#000"/><rect x="1308" y="129" width="1" height="1" fill="#000"/><rect x="1308" y="131" width="1" height="1" fill="#000"/><rect x="1308" y="133" width="1" height="1" fill="#000"/><rect x="1308" y="135" width="1" height="1" fill="#000"/><path d="M1297 124 C1299 121 1301 126 1303 124 C1305 122 1306 136 1308 136 C1310 136 1311 128 1313 124" fill="none" stroke="#0000ff" stroke-width="1.2" shape-rendering="auto"/><rect x="1327" y="121" width="1" height="1" fill="#000"/><rect x="1327" y="123" width="1" height="1" fill="#000"/><rect x="1327" y="125" width="1" height="1" fill="#000"/><rect x="1327" y="127" width="1" height="1" fill="#000"/><rect x="1327" y="129" width="1" height="1" fill="#000"/><rect x="1327" y="131" width="1" height="1" fill="#000"/><rect x="1327" y="133" width="1" height="1" fill="#000"/><rect x="1327" y="135" width="1" height="1" fill="#000"/><polyline points="1320,136 1336,121" fill="none" stroke="#0000ff" stroke-width="1.2" /><rect x="1350" y="123" width="1" height="1" fill="#000"/><rect x="1350" y="125" width="1" height="1" fill="#000"/><rect x="1350" y="127" width="1" height="1" fill="#000"/><rect x="1350" y="129" width="1" height="1" fill="#000"/><rect x="1350" y="131" width="1" height="1" fill="#000"/><rect x="1350" y="133" width="1" height="1" fill="#000"/><rect x="1350" y="135" width="1" height="1" fill="#000"/><path d="M1343 132 C1346 124 1348 122 1350 122 C1352 122 1354 124 1357 132 M1347 136 C1350 126 1352 125 1353 125 C1355 125 1357 128 1359 136" fill="none" stroke="#0000ff" stroke-width="1.1" shape-rendering="auto"/><rect x="1373" y="121" width="1" height="1" fill="#000"/><rect x="1373" y="123" width="1" height="1" fill="#000"/><rect x="1373" y="125" width="1" height="1" fill="#000"/><rect x="1373" y="127" width="1" height="1" fill="#000"/><rect x="1373" y="129" width="1" height="1" fill="#000"/><rect x="1373" y="131" width="1" height="1" fill="#000"/><rect x="1373" y="133" width="1" height="1" fill="#000"/><rect x="1373" y="135" width="1" height="1" fill="#000"/><path d="M1366 123 C1369 131 1371 135 1373 135 C1375 135 1377 131 1380 123 M1370 123 C1373 132 1374 133 1375 133 C1377 133 1379 130 1382 123" fill="none" stroke="#0000ff" stroke-width="1.1" shape-rendering="auto"/><rect x="1397" y="121" width="1" height="1" fill="#000"/><rect x="1397" y="123" width="1" height="1" fill="#000"/><rect x="1397" y="125" width="1" height="1" fill="#000"/><rect x="1397" y="127" width="1" height="1" fill="#000"/><rect x="1397" y="129" width="1" height="1" fill="#000"/><rect x="1397" y="131" width="1" height="1" fill="#000"/><rect x="1397" y="133" width="1" height="1" fill="#000"/><rect x="1397" y="135" width="1" height="1" fill="#000"/><path d="M1389 124 C1392 129 1395 129 1397 129 C1400 129 1402 129 1405 124 M1389 127 C1392 133 1395 132 1397 132 C1400 132 1402 133 1405 127 M1389 130 C1392 136 1395 135 1397 135 C1400 135 1402 136 1405 130" fill="none" stroke="#0000ff" shape-rendering="auto"/><rect x="1396" y="133" width="3" height="3" fill="#0000ff"/><rect x="1420" y="121" width="1" height="1" fill="#000"/><rect x="1420" y="123" width="1" height="1" fill="#000"/><rect x="1420" y="125" width="1" height="1" fill="#000"/><rect x="1420" y="127" width="1" height="1" fill="#000"/><rect x="1420" y="129" width="1" height="1" fill="#000"/><rect x="1420" y="131" width="1" height="1" fill="#000"/><rect x="1420" y="133" width="1" height="1" fill="#000"/><rect x="1420" y="135" width="1" height="1" fill="#000"/><path d="M1412 133 C1415 128 1418 128 1420 128 C1423 128 1425 128 1428 133 M1412 130 C1415 125 1418 125 1420 125 C1423 125 1425 125 1428 130 M1412 136 C1415 131 1418 131 1420 131 C1423 131 1425 131 1428 136" fill="none" stroke="#0000ff" shape-rendering="auto"/><rect x="1419" y="123" width="3" height="3" fill="#0000ff"/><path d="M1434.5 120V138" stroke="#a0a0a0"/><path d="M1435.5 120V138" stroke="#ffffff"/><polygon points="1441,127 1453,127 1456,124 1456,133 1453,136 1441,136" fill="#e8e000"/><rect x="1441.5" y="127.5" width="12" height="9" fill="none" stroke="#000" stroke-width="1"/><polyline points="1453,127 1456,124 1456,133 1453,136" fill="none" stroke="#000" stroke-width="1" /><rect x="1444" y="122" width="5" height="5" fill="#4060ff"/><rect x="1449" y="121" width="5" height="6" fill="#ff2020"/><rect x="1446" y="130" width="3" height="4" fill="#000"/><polygon points="1464,127 1472,127 1468,131" fill="#000"/><path d="M1477.5 120V138" stroke="#a0a0a0"/><path d="M1478.5 120V138" stroke="#ffffff"/><rect x="1483.5" y="121.5" width="15" height="14" fill="none" stroke="#000" stroke-width="1.2"/><path d="M1484 124.5H1498" stroke="#000"/><path d="M1487.5 122V135" stroke="#000"/><path d="M1484 127.5H1498" stroke="#000"/><path d="M1484 130.5H1498" stroke="#000"/><path d="M1484 133.5H1498" stroke="#000"/><path d="M1505.5 120V138" stroke="#a0a0a0"/><path d="M1506.5 120V138" stroke="#ffffff"/><text x="1519" y="136" fill="#000" font-size="16" font-weight="bold" font-family="Liberation Sans" text-anchor="middle" >'P'</text><path d="M1533.5 120V138" stroke="#a0a0a0"/><path d="M1534.5 120V138" stroke="#ffffff"/><rect x="1536" y="118" width="23" height="21" fill="#f7f7f7"/><path d="M1536 118.5H1559" stroke="#c8c8c8"/><path d="M1536.5 118V139" stroke="#c8c8c8"/><path d="M1536 138.5H1559" stroke="#fcfcfc"/><path d="M1558.5 118V139" stroke="#fcfcfc"/><rect x="1559" y="118" width="23" height="21" fill="#f7f7f7"/><path d="M1559 118.5H1582" stroke="#c8c8c8"/><path d="M1559.5 118V139" stroke="#c8c8c8"/><path d="M1559 138.5H1582" stroke="#fcfcfc"/><path d="M1581.5 118V139" stroke="#fcfcfc"/><text x="1544" y="127" fill="#800000" font-size="8" font-weight="bold" font-family="Liberation Sans" text-anchor="middle" >X</text><path d="M1549.5 125V135" stroke="#000"/><polygon points="1546,135 1552,135 1549,131" fill="#000"/><polyline points="1542,130 1549,127 1556,130" fill="none" stroke="#000" stroke-width="1" /><path d="M1541 132 q2 2 4 0 M1553 132 q2 2 4 0" fill="none" stroke="#c8b000" stroke-width="1.5"/><text x="1567" y="127" fill="#800000" font-size="8" font-weight="bold" font-family="Liberation Sans" text-anchor="middle" >Y</text><path d="M1572.5 125V135" stroke="#000"/><polygon points="1569,135 1575,135 1572,131" fill="#000"/><polyline points="1565,130 1572,127 1579,130" fill="none" stroke="#000" stroke-width="1" /><path d="M1564 132 q2 2 4 0 M1576 132 q2 2 4 0" fill="none" stroke="#c8b000" stroke-width="1.5"/><path d="M1584.5 120V138" stroke="#a0a0a0"/><path d="M1585.5 120V138" stroke="#ffffff"/><circle cx="1597" cy="126.5" r="5.2" fill="#fff" stroke="#000" stroke-width="1.6" shape-rendering="auto"/><polyline points="1601,131 1606,136" fill="none" stroke="#000" stroke-width="2.2" /><path d="M1594 126.5H1601" stroke="#000"/><path d="M1597.5 123V130" stroke="#000"/><circle cx="1620" cy="126.5" r="5.2" fill="#fff" stroke="#000" stroke-width="1.6" shape-rendering="auto"/><polyline points="1624,131 1629,136" fill="none" stroke="#000" stroke-width="2.2" /><path d="M1617 126.5H1624" stroke="#000"/><circle cx="1643" cy="126.5" r="5.2" fill="#fff" stroke="#000" stroke-width="1.6" shape-rendering="auto"/><polyline points="1647,131 1652,136" fill="none" stroke="#000" stroke-width="2.2" /><rect x="1640.5" y="124.5" width="6" height="5" fill="none" stroke="#0000c0" stroke-width="1"/><polyline points="1641,128 1643,125 1645,128" fill="none" stroke="#ff0000" stroke-width="1" /><path d="M1658.5 120V138" stroke="#a0a0a0"/><path d="M1659.5 120V138" stroke="#ffffff"/><circle cx="1065" cy="154.5" r="6.5" fill="#b8b8b8" shape-rendering="auto"/><path d="M1060 151 H1070 M1059 155 H1071 M1061 159 H1069 M1063 148 V161 M1067 148 V161" stroke="#e0e0e0" stroke-width=".8" shape-rendering="auto"/><text x="1088" y="161" fill="#000" font-size="19" font-weight="bold" font-family="Liberation Serif" text-anchor="middle" >F</text></svg>
</body></html>
